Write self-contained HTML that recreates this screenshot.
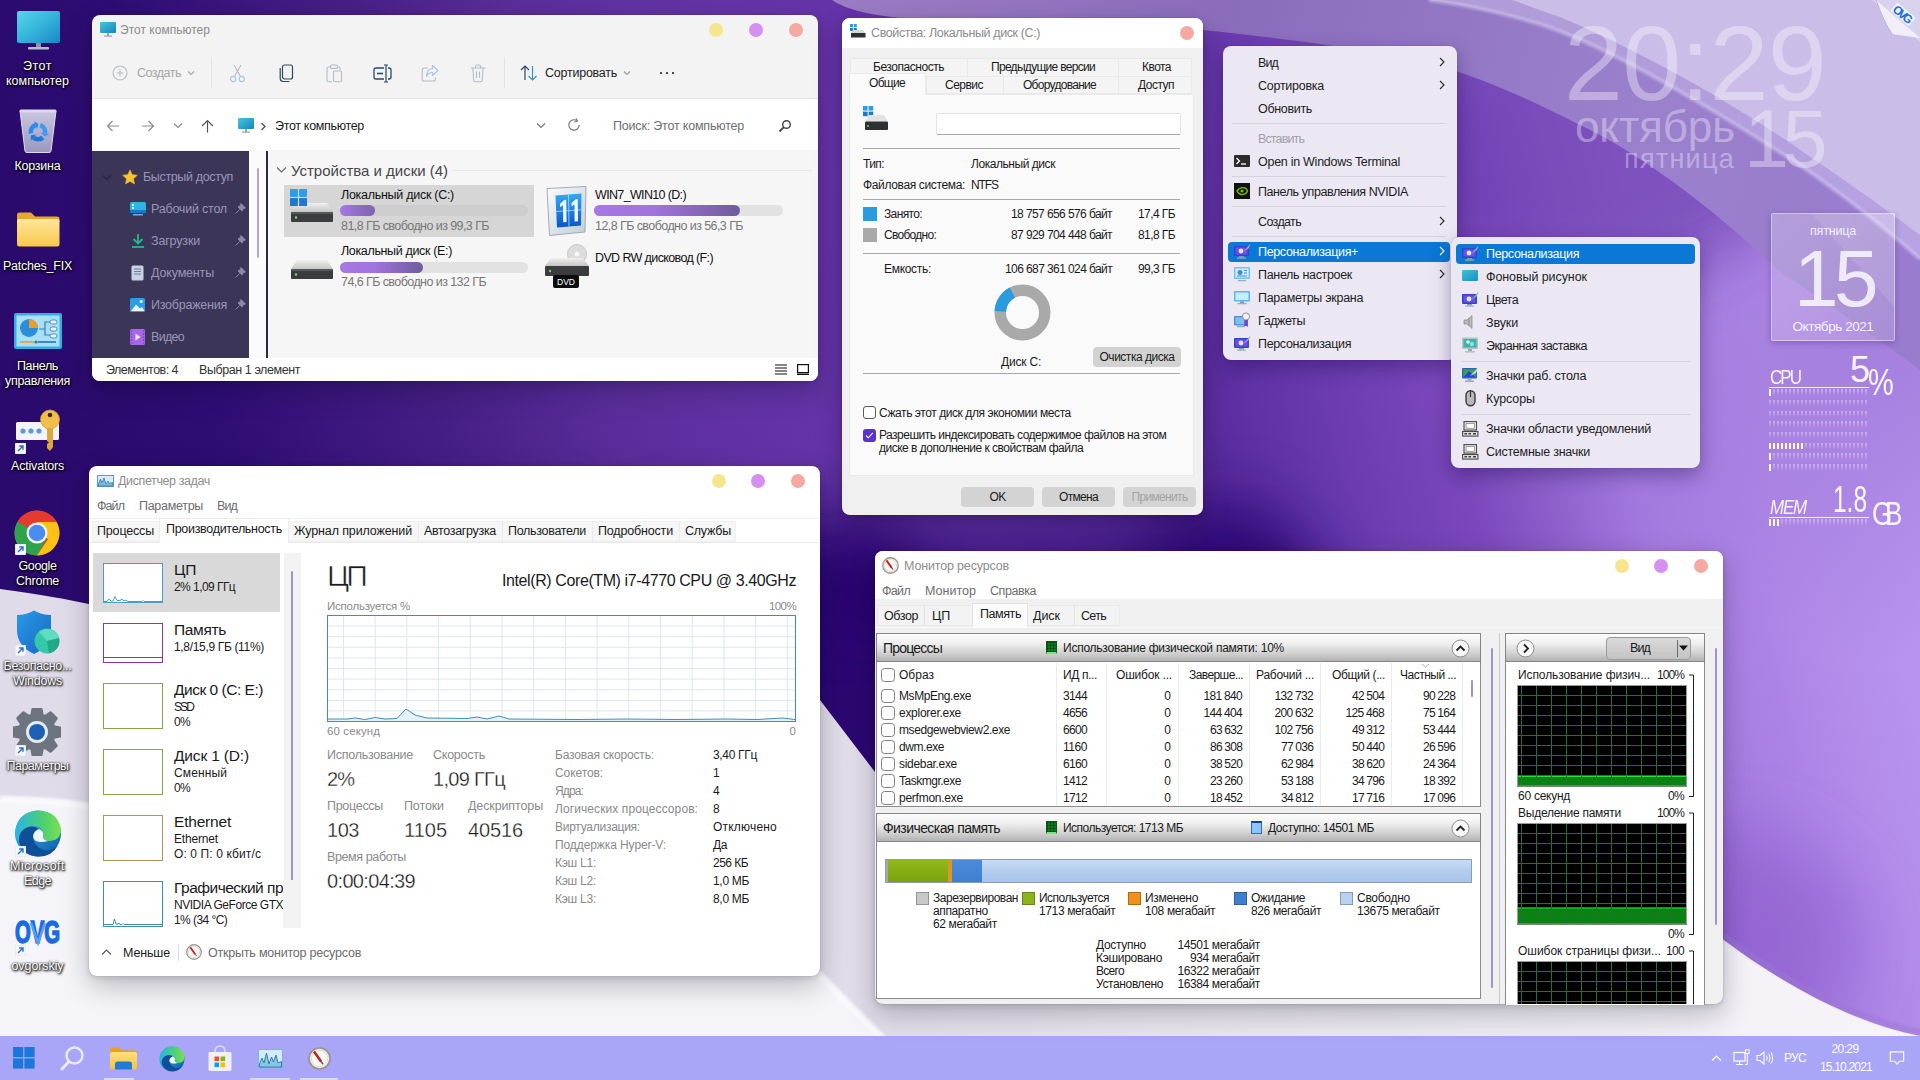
<!DOCTYPE html>
<html><head><meta charset="utf-8"><title>Desktop</title>
<style>
html,body{margin:0;padding:0;}
body{width:1920px;height:1080px;overflow:hidden;position:relative;background:#2a0a6c;font-family:"Liberation Sans",sans-serif;}
.r{position:absolute;box-sizing:border-box;}
.t{position:absolute;white-space:nowrap;line-height:1;font-family:"Liberation Sans",sans-serif;}
.win{position:absolute;box-sizing:border-box;border-radius:8px;box-shadow:0 8px 22px rgba(20,0,60,.35),0 0 2px rgba(0,0,0,.3);overflow:hidden;}
</style></head><body>
<!-- p_bg -->
<svg class="r" style="left:0;top:0" width="1920" height="1080" viewBox="0 0 1920 1080">
<defs>
<linearGradient id="gbase" x1="0" y1="200" x2="1920" y2="-300" gradientUnits="userSpaceOnUse">
<stop offset="0" stop-color="#2a0a6c"/><stop offset=".08" stop-color="#2e0d74"/><stop offset=".2" stop-color="#482087"/>
<stop offset=".27" stop-color="#5a2c9b"/><stop offset=".34" stop-color="#6232a5"/><stop offset=".41" stop-color="#6635aa"/><stop offset=".5" stop-color="#5f2fa3"/><stop offset=".56" stop-color="#5a2b9e"/><stop offset=".61" stop-color="#6738ac"/><stop offset=".68" stop-color="#7a48bc"/>
<stop offset=".76" stop-color="#a378de"/><stop offset=".84" stop-color="#b48deb"/><stop offset=".92" stop-color="#c09cf5"/><stop offset="1" stop-color="#bd99f2"/>
</linearGradient>
<linearGradient id="gdark" x1="0" y1="0" x2="0" y2="1">
<stop offset="0" stop-color="#1c0450" stop-opacity=".35"/><stop offset=".25" stop-color="#1c0450" stop-opacity="0"/>
<stop offset=".8" stop-color="#1c0450" stop-opacity="0"/><stop offset="1" stop-color="#1c0450" stop-opacity=".0"/>
</linearGradient>
<radialGradient id="gtr" cx="1920" cy="330" r="330" gradientUnits="userSpaceOnUse">
<stop offset="0" stop-color="#7a54ba" stop-opacity=".4"/><stop offset="1" stop-color="#7a54ba" stop-opacity="0"/>
</radialGradient>
<linearGradient id="gC" x1="830" y1="0" x2="1920" y2="300" gradientUnits="userSpaceOnUse">
<stop offset="0" stop-color="#9c7cc4"/><stop offset=".35" stop-color="#8a6cbc"/><stop offset=".7" stop-color="#9a80cc"/><stop offset="1" stop-color="#9a7ccf"/>
</linearGradient>
<linearGradient id="gB" x1="1300" y1="0" x2="1920" y2="300" gradientUnits="userSpaceOnUse">
<stop offset="0" stop-color="#b09cd6"/><stop offset=".5" stop-color="#b09cda"/><stop offset="1" stop-color="#b8a4e4"/>
</linearGradient>
<linearGradient id="gw" x1="0" y1="0" x2="1920" y2="0" gradientUnits="userSpaceOnUse">
<stop offset="0" stop-color="#dfdbe9"/><stop offset=".45" stop-color="#e1dde9"/><stop offset=".6" stop-color="#e8e5ed"/><stop offset=".85" stop-color="#efedf3"/><stop offset=".92" stop-color="#f5f3f8"/><stop offset="1" stop-color="#f6f4f9"/>
</linearGradient>
<filter id="bl"><feGaussianBlur stdDeviation="1.2"/></filter>
<filter id="bl6"><feGaussianBlur stdDeviation="8"/></filter>
<filter id="bl30" x="-50%" y="-50%" width="200%" height="200%"><feGaussianBlur stdDeviation="32"/></filter>
<linearGradient id="gtop" x1="0" y1="0" x2="840" y2="0" gradientUnits="userSpaceOnUse"><stop offset="0" stop-color="#5c2d9c" stop-opacity="0"/><stop offset=".2" stop-color="#5c2d9c" stop-opacity=".25"/><stop offset=".55" stop-color="#5c2d9c" stop-opacity="1"/><stop offset="1" stop-color="#5c2d9c" stop-opacity="1"/></linearGradient>
</defs>
<rect width="1920" height="1080" fill="url(#gbase)"/>
<rect x="1500" y="0" width="420" height="700" fill="url(#gtr)"/>
<ellipse cx="850" cy="690" rx="110" ry="170" fill="#24066a" opacity=".85" filter="url(#bl30)"/>
<ellipse cx="1225" cy="600" rx="90" ry="100" fill="#24066a" opacity=".7" filter="url(#bl30)"/>
<ellipse cx="1040" cy="585" rx="280" ry="50" fill="#24066a" opacity=".55" filter="url(#bl30)"/>
<ellipse cx="1570" cy="150" rx="230" ry="140" fill="#5a2aa0" opacity=".55" filter="url(#bl30)"/>
<!-- ribbons top right -->
<path d="M832,0 C842,7 862,15 910,19 C1000,23 1100,26 1203,30 C1300,40 1390,52 1456,71 C1500,86 1540,104 1600,135 C1660,168 1720,215 1778,270 C1830,305 1880,340 1920,370 L1920,0 Z" fill="url(#gC)"/>
<path d="M1429,0 C1470,5 1520,17 1554,29 C1600,46 1650,74 1684,94 C1730,120 1770,146 1800,165 C1850,200 1890,232 1920,259 L1920,0 Z" fill="url(#gB)"/>
<path d="M1429,0 C1470,5 1520,17 1554,29 C1600,46 1650,74 1684,94 C1730,120 1770,146 1800,165 C1850,200 1890,232 1920,259" fill="none" stroke="#d4c8ee" stroke-width="4" opacity=".55" filter="url(#bl)"/>
<path d="M1512,0 C1530,6 1545,12 1560,17 C1610,38 1655,62 1691,82 C1720,98 1745,114 1766,127 C1795,146 1820,163 1841,178 C1870,198 1895,216 1920,235 L1920,0 Z" fill="#cabde8"/>
<ellipse cx="1730" cy="940" rx="130" ry="110" fill="#8a58cc" opacity=".55" filter="url(#bl30)"/>
<!-- white lower region -->
<path d="M0,589 C40,594 70,600 89,604 C300,640 650,640 820,700 L875,772 C1000,900 1500,760 1724,940 C1780,982 1850,1022 1920,1036 L1920,1080 L0,1080 Z" fill="url(#gw)"/>
<path d="M0,799 C40,800 70,802 100,808 C350,870 650,900 820,975 L900,1056 L900,1080 L0,1080 Z" fill="#f5f4f8"/>
<path d="M0,799 C40,800 70,802 100,808 C350,870 650,900 820,975 L900,1056" fill="none" stroke="#fbfafc" stroke-width="7" opacity=".9" filter="url(#bl)"/>
<path d="M1724,940 C1780,982 1850,1022 1920,1036" fill="none" stroke="#9a78d0" stroke-width="6" opacity=".5" filter="url(#bl)" transform="translate(0,-4)"/>
</svg><div class="r" style="left:0px;top:1036px;width:1920px;height:44px;background:#a9a5f7;"></div>
<!-- p_icons -->
<svg class="r" style="left:17px;top:11px;" width="44" height="39" viewBox="0 0 44 39"><defs><linearGradient id="pc" x1="0" y1="0" x2="1" y2="1"><stop offset="0" stop-color="#5ad6ea"/><stop offset=".5" stop-color="#35b4dc"/><stop offset="1" stop-color="#1a86c4"/></linearGradient></defs><rect x="0" y="0" width="43" height="32" rx="2" fill="url(#pc)"/><rect x="19" y="32" width="5" height="4" fill="#8a96a4"/><rect x="11" y="36" width="21" height="2.4" rx="1" fill="#b4bec8"/></svg><span class="t" style="left:23.0px;top:59.6px;font-size:12.5px;color:#fff;letter-spacing:0.51px;text-shadow:0 0 2px rgba(0,0,0,.9),1px 1px 2px rgba(0,0,0,.9),0 1px 3px rgba(0,0,0,.7);">Этот</span><span class="t" style="left:6.0px;top:74.7px;font-size:12.5px;color:#fff;text-shadow:0 0 2px rgba(0,0,0,.9),1px 1px 2px rgba(0,0,0,.9),0 1px 3px rgba(0,0,0,.7);">компьютер</span><svg class="r" style="left:19px;top:109px;" width="38" height="44" viewBox="0 0 38 44"><defs><linearGradient id="rb" x1="0" y1="0" x2="0" y2="1"><stop offset="0" stop-color="#c9c6e0"/><stop offset="1" stop-color="#9a98c0"/></linearGradient></defs><path d="M1,2 H37 L32,42 Q31.8,43.5 30,43.5 H8 Q6.2,43.5 6,42 Z" fill="url(#rb)" stroke="#dcdaf0" stroke-width="1"/><rect x="0.5" y="0.5" width="37" height="3" rx="1.5" fill="#dcdaee"/><path d="M21.2,16.2 A7.2,7.2 0 0 1 26.1,24.3" fill="none" stroke="#3a9bf0" stroke-width="4.6"/><path d="M30.2,25.0 L25.5,27.4 L22.0,23.5 Z" fill="#3a9bf0"/><path d="M23.8,28.4 A7.2,7.2 0 0 1 14.4,28.5" fill="none" stroke="#1f78d8" stroke-width="4.6"/><path d="M11.7,31.7 L11.9,26.5 L17.1,25.3 Z" fill="#1f78d8"/><path d="M12.0,24.5 A7.2,7.2 0 0 1 16.5,16.2" fill="none" stroke="#2b8be8" stroke-width="4.6"/><path d="M15.1,12.3 L19.5,15.1 L18.0,20.2 Z" fill="#2b8be8"/></svg><span class="t" style="left:14.5px;top:159.7px;font-size:12.5px;color:#fff;letter-spacing:-0.23px;text-shadow:0 0 2px rgba(0,0,0,.9),1px 1px 2px rgba(0,0,0,.9),0 1px 3px rgba(0,0,0,.7);">Корзина</span><svg class="r" style="left:17px;top:212px;" width="43" height="35" viewBox="0 0 43 35"><defs><linearGradient id="fo" x1="0" y1="0" x2="0" y2="1"><stop offset="0" stop-color="#ffe69a"/><stop offset="1" stop-color="#f8c94a"/></linearGradient></defs><path d="M0,3 Q0,0.5 2.5,0.5 H14 L18,4.5 H40 Q42.5,4.5 42.5,7 V10 H0 Z" fill="#eaa82a"/><rect x="0" y="7" width="42.5" height="27.5" rx="2.5" fill="url(#fo)"/></svg><span class="t" style="left:3.0px;top:259.6px;font-size:12.5px;color:#fff;letter-spacing:-0.23px;text-shadow:0 0 2px rgba(0,0,0,.9),1px 1px 2px rgba(0,0,0,.9),0 1px 3px rgba(0,0,0,.7);">Patches_FIX</span><svg class="r" style="left:14px;top:313px;" width="48" height="37" viewBox="0 0 48 37"><rect x="0" y="0" width="48" height="36" rx="2" fill="#35aee8"/><rect x="2.5" y="2.5" width="43" height="31" fill="#a8e0f8"/><circle cx="15" cy="15" r="9" fill="#2a8fd8"/><path d="M15,15 V6 A9,9 0 0 1 24,15 Z" fill="#f09a28"/><path d="M25,16 H31 V9 H36 M31,16 V22 H36" fill="none" stroke="#3a7ab8" stroke-width="1.2"/><rect x="36" y="7" width="7" height="4" rx="2" fill="#e8f6ff" stroke="#3a7ab8" stroke-width=".8"/><rect x="36" y="14" width="7" height="4" rx="2" fill="#e8f6ff" stroke="#3a7ab8" stroke-width=".8"/><rect x="36" y="21" width="7" height="4" rx="2" fill="#e8f6ff" stroke="#3a7ab8" stroke-width=".8"/><path d="M6,29 H20" stroke="#f09a28" stroke-width="1.6"/><path d="M24,29 H42" stroke="#2a6fb8" stroke-width="1.6"/><circle cx="22" cy="29" r="1.6" fill="#2a6fb8"/></svg><span class="t" style="left:17.0px;top:359.6px;font-size:12.5px;color:#fff;letter-spacing:-0.36px;text-shadow:0 0 2px rgba(0,0,0,.9),1px 1px 2px rgba(0,0,0,.9),0 1px 3px rgba(0,0,0,.7);">Панель</span><span class="t" style="left:5.0px;top:374.6px;font-size:12.5px;color:#fff;letter-spacing:-0.32px;text-shadow:0 0 2px rgba(0,0,0,.9),1px 1px 2px rgba(0,0,0,.9),0 1px 3px rgba(0,0,0,.7);">управления</span><svg class="r" style="left:15px;top:409px;" width="46" height="45" viewBox="0 0 46 45"><rect x="1" y="13" width="43" height="18" rx="1.5" fill="#f2f4fa"/><circle cx="8" cy="22" r="2.6" fill="#5a9ad8"/><circle cx="16" cy="22" r="2.6" fill="#5a9ad8"/><circle cx="24" cy="22" r="2.6" fill="#5a9ad8"/><circle cx="35" cy="10.5" r="9.5" fill="#f2c04a"/><circle cx="35" cy="10.5" r="9.5" fill="none" stroke="#d89a28" stroke-width=".8"/><circle cx="35" cy="6" r="2.3" fill="#3a2a10"/><path d="M32,19 H38 V38 L35,42 L32,39 V35 L34,33.5 L32,32 Z" fill="#e0a838"/></svg><svg class="r" style="left:15px;top:443px;" width="11" height="11" viewBox="0 0 11 11"><rect width="11" height="11" rx="1" fill="#f4f6fa" stroke="#c8ccd4" stroke-width=".5"/><path d="M3,8 L8,3 M4.2,3 H8 V6.8" fill="none" stroke="#2a6fd0" stroke-width="1.4"/></svg><span class="t" style="left:11.0px;top:459.6px;font-size:12.5px;color:#fff;letter-spacing:-0.19px;text-shadow:0 0 2px rgba(0,0,0,.9),1px 1px 2px rgba(0,0,0,.9),0 1px 3px rgba(0,0,0,.7);">Activators</span><svg class="r" style="left:14px;top:510px;" width="46" height="46" viewBox="0 0 46 46"><circle cx="23" cy="23" r="22.5" fill="#e33b2e"/><path d="M23,23 L3.5,11.8 A22.5,22.5 0 0 0 23,45.5 L34,26 Z" fill="#2fa24c"/><path d="M23,23 L34,29 L23,45.5 A22.5,22.5 0 0 0 42.5,11.8 H23 Z" fill="#fbc114"/><path d="M3.5,11.8 A22.5,22.5 0 0 1 42.5,11.8 H23 Z" fill="#e33b2e"/><circle cx="23" cy="23" r="10.5" fill="#f4f4f4"/><circle cx="23" cy="23" r="8.3" fill="#4a8cf0"/></svg><svg class="r" style="left:15px;top:544px;" width="11" height="11" viewBox="0 0 11 11"><rect width="11" height="11" rx="1" fill="#f4f6fa" stroke="#c8ccd4" stroke-width=".5"/><path d="M3,8 L8,3 M4.2,3 H8 V6.8" fill="none" stroke="#2a6fd0" stroke-width="1.4"/></svg><span class="t" style="left:18.5px;top:559.6px;font-size:12.5px;color:#fff;letter-spacing:-0.38px;text-shadow:0 0 2px rgba(0,0,0,.9),1px 1px 2px rgba(0,0,0,.9),0 1px 3px rgba(0,0,0,.7);">Google</span><span class="t" style="left:16.0px;top:574.6px;font-size:12.5px;color:#fff;letter-spacing:-0.24px;text-shadow:0 0 2px rgba(0,0,0,.9),1px 1px 2px rgba(0,0,0,.9),0 1px 3px rgba(0,0,0,.7);">Chrome</span><svg class="r" style="left:16px;top:610px;" width="45" height="46" viewBox="0 0 45 46"><defs><linearGradient id="df" x1="0" y1="0" x2="1" y2="1"><stop offset="0" stop-color="#2a9ae8"/><stop offset="1" stop-color="#1668c0"/></linearGradient></defs><path d="M18,0.5 Q26,5 35,5 V20 Q35,36 18,44 Q1,36 1,20 V5 Q10,5 18,0.5 Z" fill="url(#df)"/><circle cx="31" cy="31" r="12.5" fill="#34c8a8"/><path d="M31,31 L23,22 A12.5,12.5 0 0 1 43,28 Z" fill="#62dcc0"/><path d="M31,31 L43,28 A12.5,12.5 0 0 1 33,43.3 Z" fill="#20a888"/></svg><svg class="r" style="left:15px;top:645px;" width="11" height="11" viewBox="0 0 11 11"><rect width="11" height="11" rx="1" fill="#f4f6fa" stroke="#c8ccd4" stroke-width=".5"/><path d="M3,8 L8,3 M4.2,3 H8 V6.8" fill="none" stroke="#2a6fd0" stroke-width="1.4"/></svg><span class="t" style="left:3.5px;top:659.6px;font-size:12.5px;color:#fff;letter-spacing:-0.31px;text-shadow:0 0 2px rgba(0,0,0,.9),1px 1px 2px rgba(0,0,0,.9),0 1px 3px rgba(0,0,0,.7);">Безопасно...</span><span class="t" style="left:13.0px;top:674.6px;font-size:12.5px;color:#fff;letter-spacing:-0.24px;text-shadow:0 0 2px rgba(0,0,0,.9),1px 1px 2px rgba(0,0,0,.9),0 1px 3px rgba(0,0,0,.7);">Windows</span><svg class="r" style="left:13px;top:708px;" width="48" height="48" viewBox="0 0 48 48"><path d="M40.7,18.8 L47.2,20.0 L47.2,28.0 L40.7,29.2 L39.5,32.2 L43.2,37.6 L37.6,43.2 L32.2,39.5 L29.2,40.7 L28.0,47.2 L20.0,47.2 L18.8,40.7 L15.8,39.5 L10.4,43.2 L4.8,37.6 L8.5,32.2 L7.3,29.2 L0.8,28.0 L0.8,20.0 L7.3,18.8 L8.5,15.8 L4.8,10.4 L10.4,4.8 L15.8,8.5 L18.8,7.3 L20.0,0.8 L28.0,0.8 L29.2,7.3 L32.2,8.5 L37.6,4.8 L43.2,10.4 L39.5,15.8 Z" fill="#6c7480" stroke="#6c7480" stroke-width="3" stroke-linejoin="round"/><circle cx="24" cy="24" r="11" fill="#e6ecf4"/><circle cx="24" cy="24" r="8" fill="#1d5fb4"/></svg><svg class="r" style="left:15px;top:745px;" width="11" height="11" viewBox="0 0 11 11"><rect width="11" height="11" rx="1" fill="#f4f6fa" stroke="#c8ccd4" stroke-width=".5"/><path d="M3,8 L8,3 M4.2,3 H8 V6.8" fill="none" stroke="#2a6fd0" stroke-width="1.4"/></svg><span class="t" style="left:6.5px;top:759.6px;font-size:12.5px;color:#fff;letter-spacing:-0.51px;text-shadow:0 0 2px rgba(0,0,0,.9),1px 1px 2px rgba(0,0,0,.9),0 1px 3px rgba(0,0,0,.7);">Параметры</span><svg class="r" style="left:14px;top:810px;" width="48" height="47" viewBox="0 0 48 47"><defs><linearGradient id="e1" x1="0" y1="0" x2="1" y2="1"><stop offset="0" stop-color="#35c1f1"/><stop offset="1" stop-color="#0c59a4"/></linearGradient><linearGradient id="e2" x1="0" y1="0" x2="1" y2="0"><stop offset="0" stop-color="#2ab4e8"/><stop offset=".6" stop-color="#4cd070"/><stop offset="1" stop-color="#7ce050"/></linearGradient></defs><circle cx="24" cy="23.5" r="23" fill="url(#e1)"/><path d="M1.5,20 Q4,2 24,0.5 Q44,1 47,20 Q47,30 36,31 Q28,31 29,25 Q30,21 26,18 Q18,13 10,19 Q4,24 5,32 Q1,27 1.5,20 Z" fill="url(#e2)"/><path d="M5,32 Q4,24 10,19 Q18,14 25,19 Q20,20 19,26 Q19,36 30,40 Q38,42 44,35 Q38,47 24,46.5 Q10,46 5,32 Z" fill="#0f4f9a"/><path d="M19,26 Q20,21 25,19 Q30,21 29,25 Q28,30 34,31 Q27,33 22,31 Q19,29 19,26 Z" fill="#f0f6fc"/></svg><svg class="r" style="left:15px;top:846px;" width="11" height="11" viewBox="0 0 11 11"><rect width="11" height="11" rx="1" fill="#f4f6fa" stroke="#c8ccd4" stroke-width=".5"/><path d="M3,8 L8,3 M4.2,3 H8 V6.8" fill="none" stroke="#2a6fd0" stroke-width="1.4"/></svg><span class="t" style="left:10.0px;top:859.6px;font-size:12.5px;color:#fff;letter-spacing:0.48px;text-shadow:0 0 2px rgba(0,0,0,.9),1px 1px 2px rgba(0,0,0,.9),0 1px 3px rgba(0,0,0,.7);">Microsoft</span><span class="t" style="left:24.0px;top:874.6px;font-size:12.5px;color:#fff;letter-spacing:-0.55px;text-shadow:0 0 2px rgba(0,0,0,.9),1px 1px 2px rgba(0,0,0,.9),0 1px 3px rgba(0,0,0,.7);">Edge</span><svg class="r" style="left:14px;top:917px;" width="48" height="30" viewBox="0 0 48 30"><text x="1" y="26" font-family="Liberation Sans" font-weight="700" font-size="31" fill="#1a6ae0" stroke="#1a6ae0" stroke-width="1.6" textLength="45" lengthAdjust="spacingAndGlyphs">OVG</text><path d="M17,6 L24,26 L31,6" fill="none" stroke="#5aa0f0" stroke-width="2.5"/></svg><svg class="r" style="left:15px;top:945px;" width="11" height="11" viewBox="0 0 11 11"><rect width="11" height="11" rx="1" fill="#f4f6fa" stroke="#c8ccd4" stroke-width=".5"/><path d="M3,8 L8,3 M4.2,3 H8 V6.8" fill="none" stroke="#2a6fd0" stroke-width="1.4"/></svg><span class="t" style="left:11.5px;top:959.6px;font-size:12.5px;color:#fff;letter-spacing:-0.09px;text-shadow:0 0 2px rgba(0,0,0,.9),1px 1px 2px rgba(0,0,0,.9),0 1px 3px rgba(0,0,0,.7);">ovgorskiy</span>
<!-- p_explorer -->
<div class="r" style="left:92px;top:15px;width:726px;height:366px;background:#f3f3f3;border-radius:8px;box-shadow:0 10px 28px rgba(0,0,20,.24),0 2px 6px rgba(0,0,20,.12),0 0 1px rgba(0,0,0,.4);"></div><div class="r" style="left:92px;top:98px;width:726px;height:52px;background:#fff;border-top:1px solid #e6e6e6;"></div><div class="r" style="left:92px;top:150px;width:726px;height:208px;background:#f6f6f6;"></div><div class="r" style="left:92px;top:150.5px;width:157px;height:207.5px;background:#3b3558;"></div><div class="r" style="left:249px;top:150px;width:17px;height:208px;background:#fbfbfb;"></div><div class="r" style="left:266px;top:150.5px;width:2px;height:207.5px;background:#2c2940;"></div><div class="r" style="left:257px;top:168px;width:2px;height:90px;background:#b8a2e2;border-radius:1px;"></div><div class="r" style="left:92px;top:357.5px;width:726px;height:23.5px;background:#fff;border-radius:0 0 8px 8px;"></div><svg class="r" style="left:100px;top:22px;" width="16" height="15" viewBox="0 0 16 15"><defs><linearGradient id="mg" x1="0" y1="0" x2="1" y2="1"><stop offset="0" stop-color="#45c6e0"/><stop offset="1" stop-color="#1586b8"/></linearGradient></defs><rect x="0" y="0" width="16" height="11" rx="1" fill="url(#mg)"/><rect x="7" y="11" width="2" height="3" fill="#9aa"/><rect x="4" y="13.5" width="8" height="1.3" fill="#9ab"/></svg><span class="t" style="left:120.0px;top:24.4px;font-size:12px;color:#8c8c8c;letter-spacing:0.02px;">Этот компьютер</span><div class="r" style="left:709px;top:23px;width:14px;height:14px;background:#f6e58c;border-radius:50%;"></div><div class="r" style="left:749px;top:23px;width:14px;height:14px;background:#d48ff0;border-radius:50%;"></div><div class="r" style="left:789px;top:23px;width:14px;height:14px;background:#f6a9a2;border-radius:50%;"></div><svg class="r" style="left:112px;top:64.5px;" width="16" height="16" viewBox="0 0 16 16"><circle cx="8" cy="8" r="7" fill="none" stroke="#b4bcc6" stroke-width="1.1"/><path d="M8,4.5V11.5M4.5,8H11.5" stroke="#b4bcc6" stroke-width="1.1"/></svg><span class="t" style="left:137.0px;top:66.9px;font-size:12.5px;color:#a6a6a6;letter-spacing:-0.50px;">Создать</span><svg class="r" style="left:187px;top:70px;" width="8" height="6" viewBox="0 0 8 6"><path d="M1,1.5 L4,4.5 L7,1.5" fill="none" stroke="#a6a6a6" stroke-width="1.2"/></svg><div class="r" style="left:211px;top:57px;width:1px;height:31px;background:#e4e4e4;"></div><svg class="r" style="left:229px;top:64px;" width="17" height="19" viewBox="0 0 17 19"><path d="M5,1 L11.5,12.5 M12,1 L5.5,12.5" stroke="#b4bcc6" stroke-width="1.1" fill="none"/><circle cx="4.2" cy="15" r="2.6" fill="none" stroke="#a8c4e0" stroke-width="1.1"/><circle cx="12.8" cy="15" r="2.6" fill="none" stroke="#a8c4e0" stroke-width="1.1"/></svg><svg class="r" style="left:278px;top:64px;" width="17" height="19" viewBox="0 0 17 19"><rect x="4.5" y="1" width="10" height="14" rx="2" fill="none" stroke="#2b4a63" stroke-width="1.2"/><path d="M2.2,4 V14.5 Q2.2,17.5 5.2,17.5 H11.5" fill="none" stroke="#2b4a63" stroke-width="1.2"/></svg><svg class="r" style="left:326px;top:64px;" width="17" height="19" viewBox="0 0 17 19"><path d="M4,3 H2.2 Q1,3 1,4.2 V16.5 Q1,17.7 2.2,17.7 H6" fill="none" stroke="#b4bcc6" stroke-width="1.1"/><rect x="4.5" y="1" width="7" height="3.4" rx="1" fill="none" stroke="#b4bcc6" stroke-width="1.1"/><path d="M12,3 H13 Q14,3 14,4.2 V6" fill="none" stroke="#b4bcc6" stroke-width="1.1"/><rect x="7.5" y="7" width="8" height="10.8" rx="1.2" fill="none" stroke="#b4bcc6" stroke-width="1.1"/></svg><svg class="r" style="left:373px;top:64px;" width="19" height="19" viewBox="0 0 19 19"><path d="M11,4 H3 Q1,4 1,6 V13 Q1,15 3,15 H11 M15,4 H16 Q18,4 18,6 V13 Q18,15 16,15 H15" fill="none" stroke="#2b4a63" stroke-width="1.3"/><path d="M13,1 V18 M11,1 H15 M11,18 H15" stroke="#2b4a63" stroke-width="1.2" fill="none"/><path d="M4,9.5 H10" stroke="#2b4a63" stroke-width="1.6"/></svg><svg class="r" style="left:421px;top:64px;" width="18" height="19" viewBox="0 0 18 19"><path d="M7,4 H3.2 Q1.2,4 1.2,6 V15 Q1.2,17 3.2,17 H12.5 Q14.5,17 14.5,15 V13.5" fill="none" stroke="#b4bcc6" stroke-width="1.1"/><path d="M11.5,1.5 L17,6.5 L11.5,11.5 V8.5 Q7,8.5 5.5,12.5 Q5.5,5 11.5,4.5 Z" fill="none" stroke="#a8c4e0" stroke-width="1.1" stroke-linejoin="round"/></svg><svg class="r" style="left:470px;top:64px;" width="16" height="19" viewBox="0 0 16 19"><path d="M1,4 H15 M5.5,4 V2.5 Q5.5,1 7,1 H9 Q10.5,1 10.5,2.5 V4 M2.8,4 L3.8,16.5 Q3.9,17.8 5.2,17.8 H10.8 Q12.1,17.8 12.2,16.5 L13.2,4 M6.5,7.5 V14 M9.5,7.5 V14" fill="none" stroke="#b4bcc6" stroke-width="1.1"/></svg><div class="r" style="left:504px;top:57px;width:1px;height:31px;background:#e4e4e4;"></div><svg class="r" style="left:520px;top:64px;" width="18" height="18" viewBox="0 0 18 18"><path d="M5,16 V2 M1,6 L5,2 L9,6" fill="none" stroke="#2b4a63" stroke-width="1.2"/><path d="M12.5,2 V16 M8.5,12 L12.5,16 L16.5,12" fill="none" stroke="#3a90d0" stroke-width="1.2"/></svg><span class="t" style="left:545.0px;top:66.9px;font-size:12.5px;color:#1c1c1c;letter-spacing:-0.24px;">Сортировать</span><svg class="r" style="left:623px;top:70px;" width="8" height="6" viewBox="0 0 8 6"><path d="M1,1.5 L4,4.5 L7,1.5" fill="none" stroke="#9a9a9a" stroke-width="1.1"/></svg><div class="r" style="left:659.8px;top:71.8px;width:2.4px;height:2.4px;background:#111;border-radius:50%;"></div><div class="r" style="left:665.8px;top:71.8px;width:2.4px;height:2.4px;background:#111;border-radius:50%;"></div><div class="r" style="left:671.8px;top:71.8px;width:2.4px;height:2.4px;background:#111;border-radius:50%;"></div><svg class="r" style="left:106px;top:120px;" width="14" height="12" viewBox="0 0 14 12"><path d="M13,6 H1.5 M6.5,1 L1.5,6 L6.5,11" fill="none" stroke="#8c8c8c" stroke-width="1.2"/></svg><svg class="r" style="left:141px;top:120px;" width="14" height="12" viewBox="0 0 14 12"><path d="M1,6 H12.5 M7.5,1 L12.5,6 L7.5,11" fill="none" stroke="#8c8c8c" stroke-width="1.2"/></svg><svg class="r" style="left:173px;top:122px;" width="10" height="7" viewBox="0 0 10 7"><path d="M1,1.5 L5,5.5 L9,1.5" fill="none" stroke="#8c8c8c" stroke-width="1.2"/></svg><svg class="r" style="left:201px;top:119px;" width="13" height="14" viewBox="0 0 13 14"><path d="M6.5,13.5 V1.5 M1,7 L6.5,1.5 L12,7" fill="none" stroke="#555" stroke-width="1.2"/></svg><svg class="r" style="left:238px;top:118px;" width="16" height="15" viewBox="0 0 16 15"><defs><linearGradient id="mg" x1="0" y1="0" x2="1" y2="1"><stop offset="0" stop-color="#45c6e0"/><stop offset="1" stop-color="#1586b8"/></linearGradient></defs><rect x="0" y="0" width="16" height="11" rx="1" fill="url(#mg)"/><rect x="7" y="11" width="2" height="3" fill="#9aa"/><rect x="4" y="13.5" width="8" height="1.3" fill="#9ab"/></svg><svg class="r" style="left:260px;top:122px;" width="6" height="9" viewBox="0 0 6 9"><path d="M1.5,1 L5,4.5 L1.5,8" fill="none" stroke="#555" stroke-width="1.4"/></svg><span class="t" style="left:275.0px;top:120.2px;font-size:12.5px;color:#1a1a1a;letter-spacing:-0.32px;">Этот компьютер</span><svg class="r" style="left:536px;top:122px;" width="10" height="7" viewBox="0 0 10 7"><path d="M1,1.5 L5,5.5 L9,1.5" fill="none" stroke="#777" stroke-width="1.2"/></svg><svg class="r" style="left:567px;top:118px;" width="14" height="14" viewBox="0 0 14 14"><path d="M12.2,7 A5.2,5.2 0 1 1 9.8,2.6" fill="none" stroke="#777" stroke-width="1.2"/><path d="M9,0.5 L10.5,3 L7.5,4" fill="none" stroke="#777" stroke-width="1.2"/></svg><span class="t" style="left:613.0px;top:120.2px;font-size:12.5px;color:#6e6e6e;letter-spacing:-0.19px;">Поиск: Этот компьютер</span><svg class="r" style="left:778px;top:119px;" width="14" height="14" viewBox="0 0 14 14"><circle cx="8.5" cy="5.5" r="3.8" fill="none" stroke="#444" stroke-width="1.4"/><path d="M5.8,8.2 L1.5,12.5" stroke="#444" stroke-width="1.8"/></svg><svg class="r" style="left:102px;top:174px;" width="10" height="7" viewBox="0 0 10 7"><path d="M1,1.5 L5,5.5 L9,1.5" fill="none" stroke="#2a2640" stroke-width="1.4"/></svg><svg class="r" style="left:122px;top:169px;" width="16" height="16" viewBox="0 0 16 16"><path d="M8,0.8 L10.2,5.6 L15.4,6.2 L11.5,9.8 L12.6,15 L8,12.4 L3.4,15 L4.5,9.8 L0.6,6.2 L5.8,5.6 Z" fill="#f7c531" stroke="#e9a91a" stroke-width=".6"/></svg><span class="t" style="left:143.0px;top:171.2px;font-size:12.5px;color:#9b95b6;letter-spacing:-0.35px;">Быстрый доступ</span><span class="t" style="left:151.0px;top:203.2px;font-size:12.5px;color:#9b95b6;letter-spacing:-0.21px;">Рабочий стол</span><svg class="r" style="left:235px;top:203px;" width="11" height="12" viewBox="0 0 11 12"><path d="M6,0.5 L10.5,5 L8.5,5.5 L7,8 L3,4 L5.5,2.5 Z M4.5,6.5 L0.8,10.5" fill="#8d88a6" stroke="#8d88a6" stroke-width="1"/></svg><span class="t" style="left:151.0px;top:235.2px;font-size:12.5px;color:#9b95b6;letter-spacing:-0.16px;">Загрузки</span><svg class="r" style="left:235px;top:235px;" width="11" height="12" viewBox="0 0 11 12"><path d="M6,0.5 L10.5,5 L8.5,5.5 L7,8 L3,4 L5.5,2.5 Z M4.5,6.5 L0.8,10.5" fill="#8d88a6" stroke="#8d88a6" stroke-width="1"/></svg><span class="t" style="left:151.0px;top:267.1px;font-size:12.5px;color:#9b95b6;letter-spacing:-0.16px;">Документы</span><svg class="r" style="left:235px;top:267px;" width="11" height="12" viewBox="0 0 11 12"><path d="M6,0.5 L10.5,5 L8.5,5.5 L7,8 L3,4 L5.5,2.5 Z M4.5,6.5 L0.8,10.5" fill="#8d88a6" stroke="#8d88a6" stroke-width="1"/></svg><span class="t" style="left:151.0px;top:299.1px;font-size:12.5px;color:#9b95b6;letter-spacing:-0.23px;">Изображения</span><svg class="r" style="left:235px;top:299px;" width="11" height="12" viewBox="0 0 11 12"><path d="M6,0.5 L10.5,5 L8.5,5.5 L7,8 L3,4 L5.5,2.5 Z M4.5,6.5 L0.8,10.5" fill="#8d88a6" stroke="#8d88a6" stroke-width="1"/></svg><span class="t" style="left:151.0px;top:331.1px;font-size:12.5px;color:#9b95b6;letter-spacing:-0.70px;">Видео</span><svg class="r" style="left:130px;top:202px;" width="16" height="14" viewBox="0 0 16 14"><rect x="0" y="0" width="16" height="11" rx="1.5" fill="#2fb4e6"/><rect x="0" y="8" width="16" height="3" fill="#1a78c8"/><rect x="2" y="2" width="2" height="2" fill="#fff" opacity=".8"/><rect x="2" y="5" width="2" height="2" fill="#fff" opacity=".8"/><rect x="3" y="12" width="10" height="1.5" fill="#7ad"/></svg><svg class="r" style="left:131px;top:233px;" width="14" height="16" viewBox="0 0 14 16"><path d="M7,1 V10 M2.5,6 L7,10.5 L11.5,6" fill="none" stroke="#2cb48c" stroke-width="1.8"/><path d="M1,14 H13" stroke="#2cb48c" stroke-width="1.8"/></svg><svg class="r" style="left:131px;top:265px;" width="13" height="16" viewBox="0 0 13 16"><rect x="0.5" y="0.5" width="12" height="15" rx="1.5" fill="#c9d3e4"/><path d="M3,4 H10 M3,6.5 H10 M3,9 H10" stroke="#6b7fa6" stroke-width="1.1"/></svg><svg class="r" style="left:130px;top:298px;" width="15" height="14" viewBox="0 0 15 14"><rect x="0" y="0" width="15" height="14" rx="1.5" fill="#2f9be6"/><path d="M1,13 L6,6.5 L10,10.5 L12,9 L14.5,13 Z" fill="#e9f4ff"/><circle cx="11.2" cy="3.6" r="1.5" fill="#e9f4ff"/></svg><svg class="r" style="left:130px;top:329px;" width="15" height="16" viewBox="0 0 15 16"><rect x="0" y="0" width="15" height="16" rx="1.5" fill="#a765e8"/><path d="M5.5,4.5 L10.5,8 L5.5,11.5 Z" fill="#f2e6ff"/><path d="M1.5,1.5 V14.5 M13.5,1.5 V14.5" stroke="#7c3fc0" stroke-width="1.3" stroke-dasharray="1.5,1.5"/></svg><svg class="r" style="left:276px;top:166px;" width="11" height="8" viewBox="0 0 11 8"><path d="M1,1.5 L5.5,6 L10,1.5" fill="none" stroke="#666" stroke-width="1.1"/></svg><span class="t" style="left:291.0px;top:162.8px;font-size:15px;color:#46464a;letter-spacing:-0.01px;">Устройства и диски (4)</span><div class="r" style="left:452px;top:170px;width:360px;height:1px;background:#e9e9e9;"></div><div class="r" style="left:284px;top:185px;width:250px;height:52px;background:#d6d6d6;"></div><svg class="r" style="left:291px;top:203px;" width="42" height="19" viewBox="0 0 42 19"><defs><linearGradient id="dg" x1="0" y1="0" x2="0" y2="1"><stop offset="0" stop-color="#f0f0f0"/><stop offset="1" stop-color="#c4c4c4"/></linearGradient></defs><path d="M6,0 L36,0 L42,9 L0,9 Z" fill="url(#dg)"/><rect x="0" y="9" width="42" height="10" rx="1" fill="#3a3c3e"/><rect x="0" y="9" width="42" height="2" fill="#55585a"/><circle cx="5" cy="14.5" r="1.3" fill="#5fdc5a"/></svg><svg class="r" style="left:290px;top:189px;" width="17" height="17" viewBox="0 0 17 17"><rect x="0" y="0" width="7.9" height="7.9" fill="#2a9df0"/><rect x="9.1" y="0" width="7.9" height="7.9" fill="#2a9df0"/><rect x="0" y="9.1" width="7.9" height="7.9" fill="#1879d6"/><rect x="9.1" y="9.1" width="7.9" height="7.9" fill="#1879d6"/></svg><span class="t" style="left:341.0px;top:189.2px;font-size:12.5px;color:#111;letter-spacing:-0.28px;">Локальный диск (C:)</span><div class="r" style="left:340px;top:205px;width:188px;height:11px;background:#cdcdcd;border-radius:6px;"></div><div class="r" style="left:340px;top:205px;width:35px;height:11px;border-radius:6px;background:linear-gradient(90deg,#a777e6,#7c64ac);"></div><span class="t" style="left:341.0px;top:220.2px;font-size:12.5px;color:#767676;letter-spacing:-0.57px;">81,8 ГБ свободно из 99,3 ГБ</span><svg class="r" style="left:291px;top:260px;" width="42" height="19" viewBox="0 0 42 19"><defs><linearGradient id="dg" x1="0" y1="0" x2="0" y2="1"><stop offset="0" stop-color="#f0f0f0"/><stop offset="1" stop-color="#c4c4c4"/></linearGradient></defs><path d="M6,0 L36,0 L42,9 L0,9 Z" fill="url(#dg)"/><rect x="0" y="9" width="42" height="10" rx="1" fill="#3a3c3e"/><rect x="0" y="9" width="42" height="2" fill="#55585a"/><circle cx="5" cy="14.5" r="1.3" fill="#5fdc5a"/></svg><span class="t" style="left:341.0px;top:245.2px;font-size:12.5px;color:#111;letter-spacing:-0.35px;">Локальный диск (E:)</span><div class="r" style="left:340px;top:262px;width:188px;height:11px;background:#e2e2e2;border-radius:6px;"></div><div class="r" style="left:340px;top:262px;width:83px;height:11px;border-radius:6px;background:linear-gradient(90deg,#a777e6,#a274de 40%,#6f5c9c);"></div><span class="t" style="left:341.0px;top:276.1px;font-size:12.5px;color:#767676;letter-spacing:-0.57px;">74,6 ГБ свободно из 132 ГБ</span><svg class="r" style="left:546px;top:186px;" width="42" height="50" viewBox="0 0 42 50"><defs><linearGradient id="d11" x1="0" y1="0" x2="1" y2="1"><stop offset="0" stop-color="#fafcfe"/><stop offset="1" stop-color="#c3ccd5"/></linearGradient><linearGradient id="d11b" x1="0" y1="0" x2="0" y2="1"><stop offset="0" stop-color="#35aaf2"/><stop offset="1" stop-color="#0a55c8"/></linearGradient></defs><path d="M1,2.5 L40,0.5 L39,46 L3.5,49.5 Z" fill="url(#d11)" stroke="#8f9aa6" stroke-width=".8"/><path d="M9.5,9.5 L35.5,7.5 L35,39.5 L11,41.5 Z" fill="url(#d11b)"/><path d="M9.8,25.5 L35.3,23.8" stroke="#9fd4ff" stroke-width=".9"/><path d="M22.5,8.5 L23,40.5" stroke="#9fd4ff" stroke-width=".9"/><path d="M14,18 L18.2,14 L20.2,13.8 L20.6,36 L17.2,36.3 L17,19 L14.2,21.2 Z" fill="#f2f8ff"/><path d="M25.5,17.2 L29.7,13.2 L31.7,13 L32,35.2 L28.6,35.5 L28.5,18.2 L25.7,20.4 Z" fill="#f2f8ff"/></svg><span class="t" style="left:595.0px;top:189.2px;font-size:12.5px;color:#111;letter-spacing:-0.65px;">WIN7_WIN10 (D:)</span><div class="r" style="left:594px;top:205px;width:189px;height:11px;background:#e2e2e2;border-radius:6px;"></div><div class="r" style="left:594px;top:205px;width:146px;height:11px;border-radius:6px;background:linear-gradient(90deg,#a777e6,#a274de 40%,#6f5c9c);"></div><span class="t" style="left:595.0px;top:220.2px;font-size:12.5px;color:#767676;letter-spacing:-0.57px;">12,8 ГБ свободно из 56,3 ГБ</span><svg class="r" style="left:545px;top:244px;" width="44" height="45" viewBox="0 0 44 45"><defs><linearGradient id="dv" x1="0" y1="0" x2="0" y2="1"><stop offset="0" stop-color="#f0f0f0"/><stop offset="1" stop-color="#c4c4c4"/></linearGradient></defs><circle cx="32" cy="10" r="9.5" fill="#dcdcdc" stroke="#c8c8c8"/><circle cx="32" cy="10" r="2.5" fill="#f6f6f6"/><path d="M6,14 L38,14 L44,22 L0,22 Z" fill="url(#dv)"/><rect x="0" y="22" width="44" height="10" rx="1" fill="#3a3c3e"/><circle cx="5" cy="27" r="1.2" fill="#5fdc5a"/><rect x="8" y="31" width="26" height="13" rx="2" fill="#0c0c0c"/></svg><span class="t" style="left:557.0px;top:277.8px;font-size:8.5px;color:#fff;">DVD</span><span class="t" style="left:595.0px;top:252.2px;font-size:12.5px;color:#111;letter-spacing:-0.62px;">DVD RW дисковод (F:)</span><span class="t" style="left:106.0px;top:364.1px;font-size:12.5px;color:#333;letter-spacing:-0.53px;">Элементов: 4</span><span class="t" style="left:199.0px;top:364.1px;font-size:12.5px;color:#333;letter-spacing:-0.42px;">Выбран 1 элемент</span><svg class="r" style="left:775px;top:364px;" width="12" height="11" viewBox="0 0 12 11"><path d="M0,1 H12 M0,4 H12 M0,7 H12 M0,10 H12" stroke="#111" stroke-width="1.1"/></svg><svg class="r" style="left:797px;top:364px;" width="12" height="11" viewBox="0 0 12 11"><rect x=".6" y=".6" width="10.8" height="8" fill="none" stroke="#111" stroke-width="1.2"/><path d="M0,10.3 H12" stroke="#111" stroke-width="1.4"/></svg>
<!-- p_props -->
<div class="r" style="left:842px;top:17.5px;width:361px;height:497px;background:#f0f0f0;border-radius:8px;box-shadow:0 10px 28px rgba(0,0,20,.24),0 2px 6px rgba(0,0,20,.12),0 0 1px rgba(0,0,0,.4);"></div><div class="r" style="left:842px;top:17.5px;width:361px;height:30px;background:#fff;border-radius:8px 8px 0 0;"></div><svg class="r" style="left:850px;top:24px;" width="16" height="15" viewBox="0 0 16 15"><rect x="0" y="0" width="3" height="3" fill="#2a9df0"/><rect x="3.8" y="0" width="3" height="3" fill="#2a9df0"/><rect x="0" y="3.8" width="3" height="3" fill="#1879d6"/><rect x="3.8" y="3.8" width="3" height="3" fill="#1879d6"/><path d="M3,6 L13,6 L15.5,9 L1,9 Z" fill="#d8d8d8"/><rect x="1" y="9" width="14.5" height="4.5" fill="#2e3032"/></svg><span class="t" style="left:871.0px;top:27.1px;font-size:12.5px;color:#8c8c8c;letter-spacing:-0.38px;">Свойства: Локальный диск (C:)</span><div class="r" style="left:1179.7px;top:26px;width:14px;height:14px;background:#f6a9a2;border-radius:50%;"></div><div class="r" style="left:850px;top:58px;width:342px;height:19px;background:#f4f4f4;border:1px solid #e9e9e9;"></div><div class="r" style="left:967px;top:58px;width:1px;height:19px;background:#e9e9e9;"></div><div class="r" style="left:1118px;top:58px;width:1px;height:19px;background:#e9e9e9;"></div><div class="r" style="left:926px;top:76px;width:266px;height:18px;background:#f4f4f4;border:1px solid #e9e9e9;"></div><div class="r" style="left:1003px;top:76px;width:1px;height:18px;background:#e9e9e9;"></div><div class="r" style="left:1118px;top:76px;width:1px;height:18px;background:#e9e9e9;"></div><div class="r" style="left:849px;top:94px;width:345px;height:382px;background:#fafafa;border:1px solid #eaeaea;"></div><div class="r" style="left:849px;top:73px;width:77px;height:22px;background:#fafafa;border:1px solid #eaeaea;border-bottom:none;"></div><span class="t" style="left:873.0px;top:60.9px;font-size:12px;color:#1a1a1a;letter-spacing:-0.46px;">Безопасность</span><span class="t" style="left:991.0px;top:60.9px;font-size:12px;color:#1a1a1a;letter-spacing:-0.70px;">Предыдущие версии</span><span class="t" style="left:1142.0px;top:60.9px;font-size:12px;color:#1a1a1a;letter-spacing:-0.54px;">Квота</span><span class="t" style="left:869.0px;top:76.9px;font-size:12px;color:#1a1a1a;letter-spacing:-0.69px;">Общие</span><span class="t" style="left:945.0px;top:78.9px;font-size:12px;color:#1a1a1a;letter-spacing:-0.52px;">Сервис</span><span class="t" style="left:1023.0px;top:78.9px;font-size:12px;color:#1a1a1a;letter-spacing:-0.72px;">Оборудование</span><span class="t" style="left:1138.0px;top:78.9px;font-size:12px;color:#1a1a1a;letter-spacing:-0.51px;">Доступ</span><svg class="r" style="left:863px;top:106px;" width="26" height="26" viewBox="0 0 26 26"><rect x="0" y="0" width="4.6" height="4.6" fill="#2a9df0"/><rect x="5.6" y="0" width="4.6" height="4.6" fill="#2a9df0"/><rect x="0" y="5.6" width="4.6" height="4.6" fill="#1879d6"/><rect x="5.6" y="5.6" width="4.6" height="4.6" fill="#1879d6"/><path d="M6,9 L21,9 L25,15.5 L2,15.5 Z" fill="#e2e2e2"/><rect x="2" y="15.5" width="23" height="8.5" rx="1" fill="#2e3032"/><circle cx="5" cy="20" r="1" fill="#5fdc5a"/></svg><div class="r" style="left:936px;top:113px;width:245px;height:22px;background:#fff;border:1px solid #e4e4e4;border-bottom:1px solid #a8a8a8;border-radius:2px;"></div><div class="r" style="left:863px;top:148px;width:317px;height:1px;background:#a9a9a9;"></div><div class="r" style="left:863px;top:199px;width:317px;height:1px;background:#a9a9a9;"></div><div class="r" style="left:863px;top:253px;width:317px;height:1px;background:#a9a9a9;"></div><div class="r" style="left:863px;top:373px;width:317px;height:1px;background:#a9a9a9;"></div><span class="t" style="left:863.0px;top:157.9px;font-size:12px;color:#1a1a1a;letter-spacing:-0.58px;">Тип:</span><span class="t" style="left:971.0px;top:157.9px;font-size:12px;color:#1a1a1a;letter-spacing:-0.45px;">Локальный диск</span><span class="t" style="left:863.0px;top:178.9px;font-size:12px;color:#1a1a1a;letter-spacing:-0.36px;">Файловая система:</span><span class="t" style="left:971.0px;top:178.9px;font-size:12px;color:#1a1a1a;letter-spacing:-1.08px;">NTFS</span><div class="r" style="left:863px;top:207px;width:14px;height:14px;background:#2b9be0;"></div><div class="r" style="left:863px;top:228px;width:14px;height:14px;background:#a9a9a9;"></div><span class="t" style="left:884.0px;top:207.9px;font-size:12px;color:#1a1a1a;letter-spacing:-0.63px;">Занято:</span><span class="t" style="left:884.0px;top:228.9px;font-size:12px;color:#1a1a1a;letter-spacing:-0.72px;">Свободно:</span><span class="t" style="left:1011.0px;top:207.9px;font-size:12px;color:#1a1a1a;letter-spacing:-0.59px;">18 757 656 576 байт</span><span class="t" style="left:1011.0px;top:228.9px;font-size:12px;color:#1a1a1a;letter-spacing:-0.59px;">87 929 704 448 байт</span><span class="t" style="left:1138.0px;top:207.9px;font-size:12px;color:#1a1a1a;letter-spacing:-0.58px;">17,4 ГБ</span><span class="t" style="left:1138.0px;top:228.9px;font-size:12px;color:#1a1a1a;letter-spacing:-0.58px;">81,8 ГБ</span><span class="t" style="left:884.0px;top:262.9px;font-size:12px;color:#1a1a1a;letter-spacing:-0.30px;">Емкость:</span><span class="t" style="left:1005.0px;top:262.9px;font-size:12px;color:#1a1a1a;letter-spacing:-0.59px;">106 687 361 024 байт</span><span class="t" style="left:1138.0px;top:262.9px;font-size:12px;color:#1a1a1a;letter-spacing:-0.58px;">99,3 ГБ</span><svg class="r" style="left:993.5px;top:284px;" width="57" height="57" viewBox="0 0 57 57"><circle cx="28.5" cy="28.5" r="22.25" fill="none" stroke="#a9a9a9" stroke-width="11.5"/><path d="M0.54,27.03 A28,28 0 0 1 15.79,3.55 L21.01,13.80 A16.5,16.5 0 0 0 12.02,27.64 Z" fill="#2b9be0"/></svg><span class="t" style="left:1001.0px;top:355.9px;font-size:12px;color:#1a1a1a;letter-spacing:-0.20px;">Диск C:</span><div class="r" style="left:1093px;top:347px;width:88px;height:19.5px;background:#d2d2d2;border-radius:4px;"></div><span class="t" style="left:1099.5px;top:350.9px;font-size:12px;color:#1a1a1a;letter-spacing:-0.48px;">Очистка диска</span><div class="r" style="left:863px;top:406px;width:12.5px;height:12.5px;background:#fff;border:1px solid #5a5a5a;border-radius:3px;"></div><span class="t" style="left:879.0px;top:406.9px;font-size:12px;color:#1a1a1a;letter-spacing:-0.43px;">Сжать этот диск для экономии места</span><div class="r" style="left:863px;top:429px;width:12.5px;height:12.5px;background:#5b2fd0;border-radius:3px;"></div><svg class="r" style="left:863px;top:429px;" width="12.5" height="12.5" viewBox="0 0 12.5 12.5"><path d="M3,6.5 L5.3,8.8 L9.8,3.8" fill="none" stroke="#fff" stroke-width="1.1"/></svg><span class="t" style="left:879.0px;top:429.4px;font-size:12px;color:#1a1a1a;letter-spacing:-0.52px;">Разрешить индексировать содержимое файлов на этом</span><span class="t" style="left:879.0px;top:442.4px;font-size:12px;color:#1a1a1a;letter-spacing:-0.50px;">диске в дополнение к свойствам файла</span><div class="r" style="left:961px;top:487px;width:72.5px;height:19.5px;background:#d3d3d3;border-radius:4px;"></div><span class="t" style="left:989.5px;top:490.9px;font-size:12px;color:#1a1a1a;letter-spacing:-0.67px;">OK</span><div class="r" style="left:1042px;top:487px;width:72.5px;height:19.5px;background:#d3d3d3;border-radius:4px;"></div><span class="t" style="left:1059.0px;top:490.9px;font-size:12px;color:#1a1a1a;letter-spacing:-0.68px;">Отмена</span><div class="r" style="left:1123px;top:487px;width:72.5px;height:19.5px;background:#d3d3d3;border-radius:4px;"></div><span class="t" style="left:1131.5px;top:490.9px;font-size:12px;color:#a3a3a3;letter-spacing:-0.67px;">Применить</span>
<!-- p_menu -->
<div class="r" style="left:1223px;top:46px;width:234px;height:313.5px;background:#ece8f3;border-radius:8px;box-shadow:0 8px 20px rgba(20,0,60,.35),0 0 1px rgba(0,0,0,.35);"></div><span class="t" style="left:1258.0px;top:56.8px;font-size:12.5px;color:#1c1c1c;letter-spacing:-0.87px;">Вид</span><svg class="r" style="left:1439px;top:57px;" width="6" height="10" viewBox="0 0 6 10"><path d="M1,1 L5,5 L1,9" fill="none" stroke="#2a2a2a" stroke-width="1.1"/></svg><span class="t" style="left:1258.0px;top:79.8px;font-size:12.5px;color:#1c1c1c;letter-spacing:-0.26px;">Сортировка</span><svg class="r" style="left:1439px;top:80px;" width="6" height="10" viewBox="0 0 6 10"><path d="M1,1 L5,5 L1,9" fill="none" stroke="#2a2a2a" stroke-width="1.1"/></svg><span class="t" style="left:1258.0px;top:102.8px;font-size:12.5px;color:#1c1c1c;letter-spacing:-0.32px;">Обновить</span><div class="r" style="left:1232px;top:123px;width:214px;height:1px;background:#d6d1de;"></div><span class="t" style="left:1258.0px;top:132.8px;font-size:12.5px;color:#a29fa8;letter-spacing:-0.87px;">Вставить</span><svg class="r" style="left:1234px;top:155px;" width="16" height="12" viewBox="0 0 16 12"><rect width="16" height="12" rx="1" fill="#2b2b2b"/><path d="M2.5,3 L5.5,6 L2.5,9" fill="none" stroke="#fff" stroke-width="1.3"/><path d="M7,9 H12" stroke="#fff" stroke-width="1.3"/></svg><span class="t" style="left:1258.0px;top:155.8px;font-size:12.5px;color:#1c1c1c;letter-spacing:-0.27px;">Open in Windows Terminal</span><div class="r" style="left:1232px;top:176px;width:214px;height:1px;background:#d6d1de;"></div><svg class="r" style="left:1234px;top:183px;" width="16" height="16" viewBox="0 0 16 16"><rect width="16" height="16" fill="#111"/><path d="M3,8 Q6,3.5 11,5 Q13,6 13.5,8 Q12,12 7,11.5 Q4,10.5 3,8 Z" fill="none" stroke="#76b900" stroke-width="1.4"/><circle cx="8" cy="8" r="1.6" fill="#76b900"/></svg><span class="t" style="left:1258.0px;top:185.8px;font-size:12.5px;color:#1c1c1c;letter-spacing:-0.42px;">Панель управления NVIDIA</span><div class="r" style="left:1232px;top:206px;width:214px;height:1px;background:#d6d1de;"></div><span class="t" style="left:1258.0px;top:215.8px;font-size:12.5px;color:#1c1c1c;letter-spacing:-0.64px;">Создать</span><svg class="r" style="left:1439px;top:216px;" width="6" height="10" viewBox="0 0 6 10"><path d="M1,1 L5,5 L1,9" fill="none" stroke="#2a2a2a" stroke-width="1.1"/></svg><div class="r" style="left:1232px;top:236px;width:214px;height:1px;background:#d6d1de;"></div><div class="r" style="left:1228px;top:242px;width:222px;height:19.5px;background:#0a78d4;border-radius:4px;"></div><svg class="r" style="left:1234px;top:243px;" width="17" height="16" viewBox="0 0 17 16"><rect x="0" y="3" width="15" height="10" rx="1" fill="#2a46d6"/><rect x="1.5" y="4.5" width="12" height="7" fill="#6f4fe0"/><circle cx="7" cy="8" r="2.4" fill="#dfe8ff"/><path d="M9,9 L16.5,0.5 L15,5 Z" fill="#9aa6b8"/><rect x="5" y="13" width="5" height="1.5" fill="#8899aa"/><rect x="3" y="14.5" width="9" height="1.2" fill="#9ab"/></svg><span class="t" style="left:1258.0px;top:245.8px;font-size:12.5px;color:#fff;letter-spacing:-0.35px;">Персонализация+</span><svg class="r" style="left:1439px;top:246px;" width="6" height="10" viewBox="0 0 6 10"><path d="M1,1 L5,5 L1,9" fill="none" stroke="#fff" stroke-width="1.1"/></svg><svg class="r" style="left:1234px;top:266px;" width="17" height="16" viewBox="0 0 17 16"><rect x="0" y="1" width="16" height="12" rx="1" fill="#6ec4ea"/><rect x="1.5" y="2.5" width="13" height="9" fill="#d6f0fb"/><circle cx="6" cy="6.5" r="2.5" fill="#3a8fd0"/><path d="M10,4.5 H13 M10,7 H13 M3,10 H13" stroke="#3a8fd0" stroke-width="1"/><rect x="4" y="14" width="8" height="1.3" fill="#9ab"/></svg><span class="t" style="left:1258.0px;top:268.8px;font-size:12.5px;color:#1c1c1c;letter-spacing:-0.32px;">Панель настроек</span><svg class="r" style="left:1439px;top:269px;" width="6" height="10" viewBox="0 0 6 10"><path d="M1,1 L5,5 L1,9" fill="none" stroke="#2a2a2a" stroke-width="1.1"/></svg><svg class="r" style="left:1234px;top:289px;" width="17" height="16" viewBox="0 0 17 16"><rect x="0" y="2" width="16" height="10.5" rx="1" fill="#59b7e8"/><rect x="1.5" y="3.5" width="13" height="7.5" fill="#c9ecfb"/><rect x="6" y="12.5" width="4" height="1.5" fill="#89a"/><rect x="3.5" y="14" width="9" height="1.3" fill="#9ab"/></svg><span class="t" style="left:1258.0px;top:291.8px;font-size:12.5px;color:#1c1c1c;letter-spacing:-0.29px;">Параметры экрана</span><svg class="r" style="left:1234px;top:312px;" width="17" height="16" viewBox="0 0 17 16"><rect x="0" y="4" width="14" height="9.5" rx="1" fill="#3d8fe0"/><rect x="1.3" y="5.3" width="11.4" height="6.9" fill="#7cc0f2"/><circle cx="12" cy="4.5" r="3.6" fill="#f2f2f2" stroke="#888" stroke-width=".9"/><path d="M10.5,8 L10,15 L12,13.5 L14,15 L13.5,8" fill="#7a3fd0"/><rect x="3" y="14" width="8" height="1.3" fill="#9ab"/></svg><span class="t" style="left:1258.0px;top:314.8px;font-size:12.5px;color:#1c1c1c;letter-spacing:-0.42px;">Гаджеты</span><svg class="r" style="left:1234px;top:335px;" width="17" height="16" viewBox="0 0 17 16"><rect x="0" y="3" width="15" height="10" rx="1" fill="#2a46d6"/><rect x="1.5" y="4.5" width="12" height="7" fill="#6f4fe0"/><circle cx="7" cy="8" r="2.4" fill="#dfe8ff"/><path d="M9,9 L16.5,0.5 L15,5 Z" fill="#9aa6b8"/><rect x="5" y="13" width="5" height="1.5" fill="#8899aa"/><rect x="3" y="14.5" width="9" height="1.2" fill="#9ab"/></svg><span class="t" style="left:1258.0px;top:337.8px;font-size:12.5px;color:#1c1c1c;letter-spacing:-0.35px;">Персонализация</span><div class="r" style="left:1451px;top:237px;width:249px;height:230.5px;background:#ece8f3;border-radius:8px;box-shadow:0 8px 20px rgba(20,0,60,.35),0 0 1px rgba(0,0,0,.35);"></div><div class="r" style="left:1456px;top:244px;width:239px;height:19.5px;background:#0a78d4;border-radius:4px;"></div><svg class="r" style="left:1462px;top:245px;" width="17" height="16" viewBox="0 0 17 16"><rect x="0" y="3" width="15" height="10" rx="1" fill="#2a46d6"/><rect x="1.5" y="4.5" width="12" height="7" fill="#6f4fe0"/><circle cx="7" cy="8" r="2.4" fill="#dfe8ff"/><path d="M9,9 L16.5,0.5 L15,5 Z" fill="#9aa6b8"/><rect x="5" y="13" width="5" height="1.5" fill="#8899aa"/><rect x="3" y="14.5" width="9" height="1.2" fill="#9ab"/></svg><span class="t" style="left:1486.0px;top:247.8px;font-size:12.5px;color:#fff;letter-spacing:-0.35px;">Персонализация</span><svg class="r" style="left:1462px;top:268px;" width="17" height="16" viewBox="0 0 17 16"><defs><linearGradient id="wl" x1="0" y1="0" x2="1" y2="1"><stop offset="0" stop-color="#3fc2d8"/><stop offset="1" stop-color="#1b8fc0"/></linearGradient></defs><rect x="0" y="2" width="16" height="11" rx="1.2" fill="url(#wl)"/></svg><span class="t" style="left:1486.0px;top:270.8px;font-size:12.5px;color:#1c1c1c;letter-spacing:-0.08px;">Фоновый рисунок</span><svg class="r" style="left:1462px;top:291px;" width="17" height="16" viewBox="0 0 17 16"><rect x="0" y="3" width="15" height="10" rx="1" fill="#2a46d6"/><rect x="1.5" y="4.5" width="12" height="7" fill="#6f4fe0"/><circle cx="7" cy="8" r="2.4" fill="#dfe8ff"/><path d="M9,9 L16.5,0.5 L15,5 Z" fill="#9aa6b8"/><rect x="5" y="13" width="5" height="1.5" fill="#8899aa"/><rect x="3" y="14.5" width="9" height="1.2" fill="#9ab"/></svg><span class="t" style="left:1486.0px;top:293.8px;font-size:12.5px;color:#1c1c1c;letter-spacing:-0.56px;">Цвета</span><svg class="r" style="left:1462px;top:314px;" width="17" height="16" viewBox="0 0 17 16"><path d="M2,6 H5 L10,1.5 V14.5 L5,10 H2 Z" fill="#b9b9b9" stroke="#8a8a8a" stroke-width=".7"/><path d="M7,4 V12" stroke="#8a8a8a" stroke-width=".7"/></svg><span class="t" style="left:1486.0px;top:316.8px;font-size:12.5px;color:#1c1c1c;letter-spacing:-0.12px;">Звуки</span><svg class="r" style="left:1462px;top:337px;" width="17" height="16" viewBox="0 0 17 16"><rect x="0" y="0.5" width="16" height="11.5" rx="1" fill="#b4c2c8"/><rect x="1.5" y="2" width="13" height="8.5" fill="#3fb4a0"/><circle cx="6" cy="5" r="1.8" fill="#d8f4ff"/><circle cx="10" cy="7" r="2.2" fill="#8fd8f8"/><rect x="6" y="12" width="4" height="2" fill="#9aa"/><rect x="3" y="14" width="10" height="1.6" fill="#b4c2c8"/></svg><span class="t" style="left:1486.0px;top:339.8px;font-size:12.5px;color:#1c1c1c;letter-spacing:-0.54px;">Экранная заставка</span><div class="r" style="left:1462px;top:361px;width:228px;height:1px;background:#d6d1de;"></div><svg class="r" style="left:1462px;top:367px;" width="17" height="16" viewBox="0 0 17 16"><rect x="0" y="1" width="15" height="10.5" rx="1" fill="#2f5fc0"/><rect x="1.3" y="2.3" width="12.4" height="7.9" fill="#3da050"/><path d="M1.3,10.2 L7,4 L13.7,10.2 Z" fill="#2a46d6"/><path d="M8,9 L16.5,0 L14,6 Z" fill="#cfd6de"/><rect x="5.5" y="11.5" width="4" height="2" fill="#9aa"/><rect x="3" y="13.5" width="9" height="1.6" fill="#9ab"/></svg><span class="t" style="left:1486.0px;top:369.8px;font-size:12.5px;color:#1c1c1c;letter-spacing:-0.25px;">Значки раб. стола</span><svg class="r" style="left:1465px;top:390px;" width="11" height="17" viewBox="0 0 11 17"><rect x="1" y="0.8" width="9" height="15" rx="4.5" fill="#b8b8b8" stroke="#3a3a3a" stroke-width="1.4"/><path d="M5.5,1 V7" stroke="#3a3a3a" stroke-width="1.2"/></svg><span class="t" style="left:1486.0px;top:392.8px;font-size:12.5px;color:#1c1c1c;letter-spacing:-0.09px;">Курсоры</span><div class="r" style="left:1462px;top:414px;width:228px;height:1px;background:#d6d1de;"></div><svg class="r" style="left:1462px;top:421px;" width="17" height="16" viewBox="0 0 17 16"><rect x="2" y="0.6" width="12.5" height="8.5" fill="#e9e9e9" stroke="#4a4a4a" stroke-width="1.1"/><rect x="4" y="2.4" width="8.5" height="4.8" fill="#fff" stroke="#6a6a6a" stroke-width=".6"/><rect x="0.6" y="10.5" width="15.3" height="4.6" fill="#e2e2e2" stroke="#4a4a4a" stroke-width="1.1"/><path d="M2.5,12.8 H5 M6.5,12.8 H9 M11,12.8 H14" stroke="#3a3a3a" stroke-width="1.4"/></svg><span class="t" style="left:1486.0px;top:422.8px;font-size:12.5px;color:#1c1c1c;letter-spacing:-0.24px;">Значки области уведомлений</span><svg class="r" style="left:1462px;top:444px;" width="17" height="16" viewBox="0 0 17 16"><rect x="2" y="0.6" width="12.5" height="8.5" fill="#e9e9e9" stroke="#4a4a4a" stroke-width="1.1"/><rect x="4" y="2.4" width="8.5" height="4.8" fill="#fff" stroke="#6a6a6a" stroke-width=".6"/><rect x="0.6" y="10.5" width="15.3" height="4.6" fill="#e2e2e2" stroke="#4a4a4a" stroke-width="1.1"/><path d="M2.5,12.8 H5 M6.5,12.8 H9 M11,12.8 H14" stroke="#3a3a3a" stroke-width="1.4"/></svg><span class="t" style="left:1486.0px;top:445.8px;font-size:12.5px;color:#1c1c1c;letter-spacing:-0.25px;">Системные значки</span>
<!-- p_taskmgr -->
<div class="r" style="left:89px;top:466px;width:731px;height:510px;background:#fff;border-radius:8px;box-shadow:0 10px 28px rgba(0,0,20,.24),0 2px 6px rgba(0,0,20,.12),0 0 1px rgba(0,0,0,.4);"></div><svg class="r" style="left:97px;top:475px;" width="17" height="12" viewBox="0 0 17 12"><rect x=".5" y=".5" width="16" height="11" fill="#d9ecf7" stroke="#5f9cc4" stroke-width="1"/><path d="M1.5,9 L3.5,4 L5,8 L7,3 L9,9 L11,6 L12.5,8.5 L15.5,7.5 V11 H1.5 Z" fill="#7fb8dc" stroke="#2f7fb4" stroke-width=".8"/></svg><span class="t" style="left:118.0px;top:475.1px;font-size:12.5px;color:#8c8c8c;letter-spacing:-0.39px;">Диспетчер задач</span><div class="r" style="left:712px;top:474px;width:14px;height:14px;background:#f6e58c;border-radius:50%;"></div><div class="r" style="left:751px;top:474px;width:14px;height:14px;background:#d48ff0;border-radius:50%;"></div><div class="r" style="left:790.5px;top:474px;width:14px;height:14px;background:#f6a9a2;border-radius:50%;"></div><span class="t" style="left:97.0px;top:500.1px;font-size:12.5px;color:#6d6d6d;letter-spacing:-0.93px;">Файл</span><span class="t" style="left:139.0px;top:500.1px;font-size:12.5px;color:#6d6d6d;letter-spacing:-0.29px;">Параметры</span><span class="t" style="left:217.0px;top:500.1px;font-size:12.5px;color:#6d6d6d;letter-spacing:-0.87px;">Вид</span><div class="r" style="left:90px;top:518px;width:729px;height:1px;background:#f0f0f0;"></div><div class="r" style="left:92px;top:521px;width:644px;height:21px;background:#f6f6f6;border:1px solid #efefef;"></div><div class="r" style="left:160px;top:521px;width:1px;height:21px;background:#ebebeb;"></div><div class="r" style="left:288px;top:521px;width:1px;height:21px;background:#ebebeb;"></div><div class="r" style="left:418px;top:521px;width:1px;height:21px;background:#ebebeb;"></div><div class="r" style="left:502px;top:521px;width:1px;height:21px;background:#ebebeb;"></div><div class="r" style="left:592px;top:521px;width:1px;height:21px;background:#ebebeb;"></div><div class="r" style="left:679px;top:521px;width:1px;height:21px;background:#ebebeb;"></div><div class="r" style="left:159px;top:518px;width:130px;height:25px;background:#fff;border:1px solid #ececec;border-bottom:none;"></div><div class="r" style="left:90px;top:542px;width:729px;height:1px;background:#e9e9e9;"></div><div class="r" style="left:160px;top:542px;width:128px;height:1px;background:#fff;"></div><span class="t" style="left:97.0px;top:525.1px;font-size:12.5px;color:#1a1a1a;letter-spacing:-0.17px;">Процессы</span><span class="t" style="left:166.0px;top:523.1px;font-size:12.5px;color:#1a1a1a;letter-spacing:-0.30px;">Производительность</span><span class="t" style="left:294.0px;top:525.1px;font-size:12.5px;color:#1a1a1a;letter-spacing:-0.13px;">Журнал приложений</span><span class="t" style="left:424.0px;top:525.1px;font-size:12.5px;color:#1a1a1a;letter-spacing:-0.32px;">Автозагрузка</span><span class="t" style="left:508.0px;top:525.1px;font-size:12.5px;color:#1a1a1a;letter-spacing:-0.30px;">Пользователи</span><span class="t" style="left:598.0px;top:525.1px;font-size:12.5px;color:#1a1a1a;letter-spacing:-0.17px;">Подробности</span><span class="t" style="left:685.0px;top:525.1px;font-size:12.5px;color:#1a1a1a;letter-spacing:-0.23px;">Службы</span><div class="r" style="left:93px;top:553px;width:187px;height:59px;background:#d9d9d9;"></div><div class="r" style="left:284px;top:553px;width:17px;height:375px;background:#f3f3f3;"></div><div class="r" style="left:291px;top:571px;width:2px;height:333px;background:#a294c8;border-radius:1px;"></div><div class="r" style="left:103px;top:563px;width:60px;height:40px;background:#fff;border:1px solid #4a9ccc;"></div><span class="t" style="left:174.0px;top:562.0px;font-size:15.5px;color:#1a1a1a;letter-spacing:-0.30px;">ЦП</span><span class="t" style="left:174.0px;top:580.9px;font-size:12px;color:#1a1a1a;letter-spacing:-0.55px;">2%  1,09 ГГц</span><div class="r" style="left:103px;top:623px;width:60px;height:40px;background:#fff;border:1px solid #8f35a8;"></div><span class="t" style="left:174.0px;top:622.0px;font-size:15.5px;color:#1a1a1a;letter-spacing:-0.33px;">Память</span><span class="t" style="left:174.0px;top:640.9px;font-size:12px;color:#1a1a1a;letter-spacing:-0.33px;">1,8/15,9 ГБ (11%)</span><div class="r" style="left:103px;top:683px;width:60px;height:46px;background:#fff;border:1px solid #86a546;"></div><span class="t" style="left:174.0px;top:682.0px;font-size:15.5px;color:#1a1a1a;letter-spacing:-0.48px;">Диск 0 (C: E:)</span><span class="t" style="left:174.0px;top:700.9px;font-size:12px;color:#1a1a1a;letter-spacing:-1.89px;">SSD</span><span class="t" style="left:174.0px;top:716.4px;font-size:12px;color:#1a1a1a;letter-spacing:-0.67px;">0%</span><div class="r" style="left:103px;top:749px;width:60px;height:46px;background:#fff;border:1px solid #86a546;"></div><span class="t" style="left:174.0px;top:748.0px;font-size:15.5px;color:#1a1a1a;letter-spacing:-0.16px;">Диск 1 (D:)</span><span class="t" style="left:174.0px;top:766.9px;font-size:12px;color:#1a1a1a;letter-spacing:0.12px;">Сменный</span><span class="t" style="left:174.0px;top:782.4px;font-size:12px;color:#1a1a1a;letter-spacing:-0.67px;">0%</span><div class="r" style="left:103px;top:815px;width:60px;height:46px;background:#fff;border:1px solid #b8905a;"></div><span class="t" style="left:174.0px;top:814.0px;font-size:15.5px;color:#1a1a1a;letter-spacing:-0.20px;">Ethernet</span><span class="t" style="left:174.0px;top:832.9px;font-size:12px;color:#1a1a1a;letter-spacing:-0.17px;">Ethernet</span><span class="t" style="left:174.0px;top:848.4px;font-size:12px;color:#1a1a1a;letter-spacing:0.11px;">О: 0 П: 0 кбит/с</span><div class="r" style="left:103px;top:881px;width:60px;height:46px;background:#fff;border:1px solid #3f8db4;"></div><span class="t" style="left:174.0px;top:880.0px;font-size:15.5px;color:#1a1a1a;letter-spacing:-0.50px;">Графический пр</span><span class="t" style="left:174.0px;top:898.9px;font-size:12px;color:#1a1a1a;letter-spacing:-0.46px;">NVIDIA GeForce GTX</span><span class="t" style="left:174.0px;top:914.4px;font-size:12px;color:#1a1a1a;letter-spacing:-0.56px;">1%  (34 °C)</span><svg class="r" style="left:104px;top:590px;" width="58" height="12" viewBox="0 0 58 12"><path d="M0,11.5 H3 L5,9 L7,11 H9 L11,6.5 L13,10.5 H16 L18,9 L20,11 L22,10 L24,11.5 H38 L39,10.5 L40,11.5 H58" fill="none" stroke="#4a9ccc" stroke-width="1"/></svg><div class="r" style="left:104px;top:656.5px;width:58px;height:1px;background:#8f35a8;"></div><svg class="r" style="left:104px;top:915px;" width="58" height="10" viewBox="0 0 58 10"><path d="M0,9.5 H9 L10.5,4 L12,9 H14 L15,8 L16,9.5 H18 L19,8.5 L20,9.5 H58" fill="none" stroke="#3f8db4" stroke-width="1"/></svg><div class="r" style="left:283px;top:880px;width:18px;height:48px;background:#f3f3f3;"></div><span class="t" style="left:327.0px;top:560.5px;font-size:30px;color:#1a1a1a;letter-spacing:-2.88px;-webkit-text-stroke:.55px #fff;">ЦП</span><span class="t" style="left:502.0px;top:573.3px;font-size:16px;color:#1a1a1a;letter-spacing:-0.40px;">Intel(R) Core(TM) i7-4770 CPU @ 3.40GHz</span><span class="t" style="left:327.0px;top:600.8px;font-size:11.5px;color:#8a8a8a;letter-spacing:-0.24px;">Используется %</span><span class="t" style="left:769.0px;top:600.8px;font-size:11.5px;color:#8a8a8a;letter-spacing:-0.60px;">100%</span><svg class="r" style="left:327px;top:615px;" width="469" height="107" viewBox="0 0 469 107"><rect x=".5" y=".5" width="468" height="106" fill="#fff" stroke="#3c8fb8" stroke-width="1"/><path d="M16.5,1 V106" stroke="#dbe9f1" stroke-width="1"/><path d="M48.2,1 V106" stroke="#dbe9f1" stroke-width="1"/><path d="M79.9,1 V106" stroke="#dbe9f1" stroke-width="1"/><path d="M111.6,1 V106" stroke="#dbe9f1" stroke-width="1"/><path d="M143.3,1 V106" stroke="#dbe9f1" stroke-width="1"/><path d="M175.0,1 V106" stroke="#dbe9f1" stroke-width="1"/><path d="M206.7,1 V106" stroke="#dbe9f1" stroke-width="1"/><path d="M238.4,1 V106" stroke="#dbe9f1" stroke-width="1"/><path d="M270.1,1 V106" stroke="#dbe9f1" stroke-width="1"/><path d="M301.8,1 V106" stroke="#dbe9f1" stroke-width="1"/><path d="M333.5,1 V106" stroke="#dbe9f1" stroke-width="1"/><path d="M365.2,1 V106" stroke="#dbe9f1" stroke-width="1"/><path d="M396.9,1 V106" stroke="#dbe9f1" stroke-width="1"/><path d="M428.6,1 V106" stroke="#dbe9f1" stroke-width="1"/><path d="M460.3,1 V106" stroke="#dbe9f1" stroke-width="1"/><path d="M1,11.1 H468" stroke="#dbe9f1" stroke-width="1"/><path d="M1,21.7 H468" stroke="#dbe9f1" stroke-width="1"/><path d="M1,32.3 H468" stroke="#dbe9f1" stroke-width="1"/><path d="M1,42.9 H468" stroke="#dbe9f1" stroke-width="1"/><path d="M1,53.5 H468" stroke="#dbe9f1" stroke-width="1"/><path d="M1,64.1 H468" stroke="#dbe9f1" stroke-width="1"/><path d="M1,74.7 H468" stroke="#dbe9f1" stroke-width="1"/><path d="M1,85.3 H468" stroke="#dbe9f1" stroke-width="1"/><path d="M1,95.9 H468" stroke="#dbe9f1" stroke-width="1"/><path d="M1,104 L20,104 L28,103 L38,104.5 L48,102.5 L58,104 L70,103.5 L79,94 L88,100 L100,103 L140,103.5 L150,102 L160,104 L172,101 L182,104 L250,104.5 L300,104 L350,104.5 L400,104 L430,104.5 L455,103 L468,104.5 L468,106 L1,106 Z" fill="#e4f1f8"/><path d="M1,104 L20,104 L28,103 L38,104.5 L48,102.5 L58,104 L70,103.5 L79,94 L88,100 L100,103 L140,103.5 L150,102 L160,104 L172,101 L182,104 L250,104.5 L300,104 L350,104.5 L400,104 L430,104.5 L455,103 L468,104.5" fill="none" stroke="#3c8fb8" stroke-width="1"/></svg><span class="t" style="left:327.0px;top:725.8px;font-size:11.5px;color:#8a8a8a;letter-spacing:0.10px;">60 секунд</span><span class="t" style="left:789.6px;top:725.8px;font-size:11.5px;color:#8a8a8a;">0</span><span class="t" style="left:327.0px;top:749.1px;font-size:12.5px;color:#8a8a8a;letter-spacing:-0.26px;">Использование</span><span class="t" style="left:433.0px;top:749.1px;font-size:12.5px;color:#8a8a8a;letter-spacing:-0.25px;">Скорость</span><span class="t" style="left:327.0px;top:768.6px;font-size:20px;color:#1a1a1a;letter-spacing:-0.95px;-webkit-text-stroke:.3px #fff;">2%</span><span class="t" style="left:433.0px;top:768.6px;font-size:20px;color:#1a1a1a;letter-spacing:-0.70px;-webkit-text-stroke:.3px #fff;">1,09 ГГц</span><span class="t" style="left:327.0px;top:800.1px;font-size:12.5px;color:#8a8a8a;letter-spacing:-0.29px;">Процессы</span><span class="t" style="left:404.0px;top:800.1px;font-size:12.5px;color:#8a8a8a;letter-spacing:-0.11px;">Потоки</span><span class="t" style="left:468.0px;top:800.1px;font-size:12.5px;color:#8a8a8a;letter-spacing:-0.12px;">Дескрипторы</span><span class="t" style="left:327.0px;top:819.6px;font-size:20px;color:#1a1a1a;letter-spacing:-0.46px;-webkit-text-stroke:.3px #fff;">103</span><span class="t" style="left:404.0px;top:819.6px;font-size:20px;color:#1a1a1a;-webkit-text-stroke:.3px #fff;">1105</span><span class="t" style="left:468.0px;top:819.6px;font-size:20px;color:#1a1a1a;letter-spacing:-0.12px;-webkit-text-stroke:.3px #fff;">40516</span><span class="t" style="left:327.0px;top:851.1px;font-size:12.5px;color:#8a8a8a;letter-spacing:-0.38px;">Время работы</span><span class="t" style="left:327.0px;top:870.6px;font-size:20px;color:#1a1a1a;letter-spacing:-0.65px;-webkit-text-stroke:.3px #fff;">0:00:04:39</span><span class="t" style="left:555.0px;top:749.4px;font-size:12px;color:#8a8a8a;letter-spacing:-0.16px;">Базовая скорость:</span><span class="t" style="left:713.0px;top:749.4px;font-size:12px;color:#1a1a1a;letter-spacing:-0.32px;">3,40 ГГц</span><span class="t" style="left:555.0px;top:767.4px;font-size:12px;color:#8a8a8a;letter-spacing:-0.09px;">Сокетов:</span><span class="t" style="left:713.0px;top:767.4px;font-size:12px;color:#1a1a1a;">1</span><span class="t" style="left:555.0px;top:785.3px;font-size:12px;color:#8a8a8a;letter-spacing:-0.87px;">Ядра:</span><span class="t" style="left:713.0px;top:785.3px;font-size:12px;color:#1a1a1a;">4</span><span class="t" style="left:555.0px;top:803.3px;font-size:12px;color:#8a8a8a;letter-spacing:0.09px;">Логических процессоров:</span><span class="t" style="left:713.0px;top:803.3px;font-size:12px;color:#1a1a1a;">8</span><span class="t" style="left:555.0px;top:821.2px;font-size:12px;color:#8a8a8a;letter-spacing:-0.26px;">Виртуализация:</span><span class="t" style="left:713.0px;top:821.2px;font-size:12px;color:#1a1a1a;letter-spacing:0.20px;">Отключено</span><span class="t" style="left:555.0px;top:839.2px;font-size:12px;color:#8a8a8a;letter-spacing:-0.10px;">Поддержка Hyper-V:</span><span class="t" style="left:713.0px;top:839.2px;font-size:12px;color:#1a1a1a;letter-spacing:-0.40px;">Да</span><span class="t" style="left:555.0px;top:857.1px;font-size:12px;color:#8a8a8a;letter-spacing:-0.25px;">Кэш L1:</span><span class="t" style="left:713.0px;top:857.1px;font-size:12px;color:#1a1a1a;letter-spacing:-0.54px;">256 КБ</span><span class="t" style="left:555.0px;top:875.1px;font-size:12px;color:#8a8a8a;letter-spacing:-0.25px;">Кэш L2:</span><span class="t" style="left:713.0px;top:875.1px;font-size:12px;color:#1a1a1a;letter-spacing:-0.31px;">1,0 МБ</span><span class="t" style="left:555.0px;top:893.0px;font-size:12px;color:#8a8a8a;letter-spacing:-0.25px;">Кэш L3:</span><span class="t" style="left:713.0px;top:893.0px;font-size:12px;color:#1a1a1a;letter-spacing:-0.31px;">8,0 МБ</span><svg class="r" style="left:101px;top:948px;" width="11" height="8" viewBox="0 0 11 8"><path d="M1,6.5 L5.5,2 L10,6.5" fill="none" stroke="#555" stroke-width="1.1"/></svg><span class="t" style="left:123.0px;top:947.1px;font-size:12.5px;color:#1a1a1a;letter-spacing:-0.15px;">Меньше</span><div class="r" style="left:178px;top:945px;width:1px;height:16px;background:#dcdcdc;"></div><svg class="r" style="left:186px;top:944px;" width="16" height="16" viewBox="0 0 16 16"><circle cx="8" cy="8" r="7.3" fill="#f4f0ec" stroke="#9a948c" stroke-width="1.2"/><circle cx="8" cy="8" r="5.6" fill="#fbfaf8" stroke="#d8d2c8" stroke-width=".6"/><path d="M4.2,3.2 L9.2,10.2" stroke="#c8201c" stroke-width="1.8"/><path d="M9.2,10.2 L10.5,12" stroke="#555" stroke-width="1"/></svg><span class="t" style="left:208.0px;top:947.1px;font-size:12.5px;color:#6d6d6d;letter-spacing:-0.21px;">Открыть монитор ресурсов</span>
<!-- p_resmon -->
<div class="r" style="left:875px;top:550.5px;width:848px;height:453.5px;background:#f0f0f0;border-radius:8px;box-shadow:0 10px 28px rgba(0,0,20,.24),0 2px 6px rgba(0,0,20,.12),0 0 1px rgba(0,0,0,.4);"></div><div class="r" style="left:875px;top:550.5px;width:848px;height:48.5px;background:#fff;border-radius:8px 8px 0 0;"></div><div class="r" style="left:875px;top:627px;width:848px;height:1px;background:#fafafa;"></div><svg class="r" style="left:882px;top:557px;" width="17" height="17" viewBox="0 0 16 16"><circle cx="8" cy="8" r="7.3" fill="#f4f0ec" stroke="#9a948c" stroke-width="1.2"/><circle cx="8" cy="8" r="5.6" fill="#fbfaf8" stroke="#d8d2c8" stroke-width=".6"/><path d="M4.2,3.2 L9.2,10.2" stroke="#c8201c" stroke-width="1.8"/><path d="M9.2,10.2 L10.5,12" stroke="#555" stroke-width="1"/></svg><span class="t" style="left:904.0px;top:560.1px;font-size:12.5px;color:#8c8c8c;letter-spacing:-0.16px;">Монитор ресурсов</span><div class="r" style="left:1615px;top:559px;width:14px;height:14px;background:#f6e58c;border-radius:50%;"></div><div class="r" style="left:1654px;top:559px;width:14px;height:14px;background:#d48ff0;border-radius:50%;"></div><div class="r" style="left:1694px;top:559px;width:14px;height:14px;background:#f6a9a2;border-radius:50%;"></div><span class="t" style="left:882.0px;top:585.1px;font-size:12.5px;color:#6d6d6d;letter-spacing:-0.68px;">Файл</span><span class="t" style="left:925.0px;top:585.1px;font-size:12.5px;color:#6d6d6d;letter-spacing:0.02px;">Монитор</span><span class="t" style="left:990.0px;top:585.1px;font-size:12.5px;color:#6d6d6d;letter-spacing:-0.43px;">Справка</span><div class="r" style="left:877px;top:605px;width:243px;height:21px;background:#f3f3f3;border:1px solid #e9e9e9;"></div><div class="r" style="left:924px;top:605px;width:1px;height:21px;background:#e2e2e2;"></div><div class="r" style="left:1074px;top:605px;width:1px;height:21px;background:#e2e2e2;"></div><div class="r" style="left:972px;top:603px;width:56px;height:24px;background:#fbfbfb;border:1px solid #e2e2e2;border-bottom:none;"></div><span class="t" style="left:884.0px;top:610.1px;font-size:12.5px;color:#1a1a1a;letter-spacing:-0.42px;">Обзор</span><span class="t" style="left:932.0px;top:610.1px;font-size:12.5px;color:#1a1a1a;letter-spacing:-0.12px;">ЦП</span><span class="t" style="left:980.0px;top:608.1px;font-size:12.5px;color:#1a1a1a;letter-spacing:-0.42px;">Память</span><span class="t" style="left:1033.0px;top:610.1px;font-size:12.5px;color:#1a1a1a;letter-spacing:-0.04px;">Диск</span><span class="t" style="left:1081.0px;top:610.1px;font-size:12.5px;color:#1a1a1a;letter-spacing:-0.70px;">Сеть</span><div class="r" style="left:876px;top:633px;width:605px;height:174px;background:#fff;border:1px solid #8a8a8a;"></div><div class="r" style="left:876px;top:633px;width:605px;height:29px;background:linear-gradient(180deg,#fdfdfd 0%,#efefef 35%,#d2d2d2 70%,#b2b2b2 100%);border:1px solid #858585;"></div><span class="t" style="left:883.0px;top:641.3px;font-size:14px;color:#1a1a1a;letter-spacing:-0.79px;">Процессы</span><div class="r" style="left:1046px;top:641px;width:11px;height:13px;background:#0e7a1e;border:1px solid #0a5a14;border-bottom:2px solid #7fe08a;background-image:repeating-linear-gradient(90deg,rgba(0,0,0,.25) 0 1px,transparent 1px 3px),repeating-linear-gradient(0deg,rgba(0,0,0,.25) 0 1px,transparent 1px 3px);"></div><span class="t" style="left:1063.0px;top:642.4px;font-size:12px;color:#1a1a1a;letter-spacing:-0.24px;">Использование физической памяти: 10%</span><svg class="r" style="left:1450.5px;top:638.5px;" width="19" height="19" viewBox="0 0 19 19"><circle cx="9.5" cy="9.5" r="8.5" fill="#f6f6f6" stroke="#8c8c8c" stroke-width="1"/><path d="M5.5,11.5 L9.5,7.5 L13.5,11.5" fill="none" stroke="#222" stroke-width="1.8"/></svg><div class="r" style="left:1056px;top:663px;width:1px;height:143px;background:#ececec;"></div><div class="r" style="left:1106px;top:663px;width:1px;height:143px;background:#ececec;"></div><div class="r" style="left:1178px;top:663px;width:1px;height:143px;background:#ececec;"></div><div class="r" style="left:1249px;top:663px;width:1px;height:143px;background:#ececec;"></div><div class="r" style="left:1320px;top:663px;width:1px;height:143px;background:#ececec;"></div><div class="r" style="left:1391px;top:663px;width:1px;height:143px;background:#ececec;"></div><div class="r" style="left:1462px;top:663px;width:1px;height:143px;background:#ececec;"></div><div class="r" style="left:1471px;top:680px;width:2px;height:17px;background:#a294c8;border-radius:1px;"></div><svg class="r" style="left:1421px;top:663px;" width="9" height="5" viewBox="0 0 9 5"><path d="M1,1 L4.5,4 L8,1" fill="none" stroke="#aaa" stroke-width="1"/></svg><div class="r" style="left:881px;top:668px;width:13.5px;height:13.5px;background:#fdfdfd;border:1px solid #808080;border-radius:3.5px;"></div><span class="t" style="left:899.0px;top:669.4px;font-size:12px;color:#1a1a1a;letter-spacing:0.02px;">Образ</span><span class="t" style="left:1063.0px;top:669.4px;font-size:12px;color:#1a1a1a;letter-spacing:-0.37px;">ИД п...</span><span class="t" style="left:1116.0px;top:669.4px;font-size:12px;color:#1a1a1a;letter-spacing:-0.18px;">Ошибок ...</span><span class="t" style="left:1189.0px;top:669.4px;font-size:12px;color:#1a1a1a;letter-spacing:-0.58px;">Заверше...</span><span class="t" style="left:1256.0px;top:669.4px;font-size:12px;color:#1a1a1a;letter-spacing:-0.23px;">Рабочий ...</span><span class="t" style="left:1332.0px;top:669.4px;font-size:12px;color:#1a1a1a;letter-spacing:-0.38px;">Общий (...</span><span class="t" style="left:1400.0px;top:669.4px;font-size:12px;color:#1a1a1a;letter-spacing:-0.50px;">Частный ...</span><div class="r" style="left:881px;top:689px;width:13.5px;height:13.5px;background:#fdfdfd;border:1px solid #808080;border-radius:3.5px;"></div><span class="t" style="left:899.0px;top:690.4px;font-size:12px;color:#1a1a1a;letter-spacing:-0.43px;">MsMpEng.exe</span><span class="t" style="left:1063.0px;top:690.4px;font-size:12px;color:#1a1a1a;letter-spacing:-0.67px;">3144</span><span class="t" style="left:1164.3px;top:690.4px;font-size:12px;color:#1a1a1a;">0</span><span class="t" style="left:1203.5px;top:690.4px;font-size:12px;color:#1a1a1a;letter-spacing:-0.70px;">181 840</span><span class="t" style="left:1274.5px;top:690.4px;font-size:12px;color:#1a1a1a;letter-spacing:-0.70px;">132 732</span><span class="t" style="left:1352.0px;top:690.4px;font-size:12px;color:#1a1a1a;letter-spacing:-0.78px;">42 504</span><span class="t" style="left:1423.0px;top:690.4px;font-size:12px;color:#1a1a1a;letter-spacing:-0.78px;">90 228</span><div class="r" style="left:881px;top:706px;width:13.5px;height:13.5px;background:#fdfdfd;border:1px solid #808080;border-radius:3.5px;"></div><span class="t" style="left:899.0px;top:707.4px;font-size:12px;color:#1a1a1a;letter-spacing:-0.28px;">explorer.exe</span><span class="t" style="left:1063.0px;top:707.4px;font-size:12px;color:#1a1a1a;letter-spacing:-0.67px;">4656</span><span class="t" style="left:1164.3px;top:707.4px;font-size:12px;color:#1a1a1a;">0</span><span class="t" style="left:1203.5px;top:707.4px;font-size:12px;color:#1a1a1a;letter-spacing:-0.70px;">144 404</span><span class="t" style="left:1274.5px;top:707.4px;font-size:12px;color:#1a1a1a;letter-spacing:-0.70px;">200 632</span><span class="t" style="left:1345.5px;top:707.4px;font-size:12px;color:#1a1a1a;letter-spacing:-0.70px;">125 468</span><span class="t" style="left:1423.0px;top:707.4px;font-size:12px;color:#1a1a1a;letter-spacing:-0.78px;">75 164</span><div class="r" style="left:881px;top:723px;width:13.5px;height:13.5px;background:#fdfdfd;border:1px solid #808080;border-radius:3.5px;"></div><span class="t" style="left:899.0px;top:724.4px;font-size:12px;color:#1a1a1a;letter-spacing:-0.39px;">msedgewebview2.exe</span><span class="t" style="left:1063.0px;top:724.4px;font-size:12px;color:#1a1a1a;letter-spacing:-0.67px;">6600</span><span class="t" style="left:1164.3px;top:724.4px;font-size:12px;color:#1a1a1a;">0</span><span class="t" style="left:1210.0px;top:724.4px;font-size:12px;color:#1a1a1a;letter-spacing:-0.78px;">63 632</span><span class="t" style="left:1274.5px;top:724.4px;font-size:12px;color:#1a1a1a;letter-spacing:-0.70px;">102 756</span><span class="t" style="left:1352.0px;top:724.4px;font-size:12px;color:#1a1a1a;letter-spacing:-0.78px;">49 312</span><span class="t" style="left:1423.0px;top:724.4px;font-size:12px;color:#1a1a1a;letter-spacing:-0.78px;">53 444</span><div class="r" style="left:881px;top:740px;width:13.5px;height:13.5px;background:#fdfdfd;border:1px solid #808080;border-radius:3.5px;"></div><span class="t" style="left:899.0px;top:741.4px;font-size:12px;color:#1a1a1a;letter-spacing:-0.43px;">dwm.exe</span><span class="t" style="left:1063.0px;top:741.4px;font-size:12px;color:#1a1a1a;letter-spacing:-0.45px;">1160</span><span class="t" style="left:1164.3px;top:741.4px;font-size:12px;color:#1a1a1a;">0</span><span class="t" style="left:1210.0px;top:741.4px;font-size:12px;color:#1a1a1a;letter-spacing:-0.78px;">86 308</span><span class="t" style="left:1281.0px;top:741.4px;font-size:12px;color:#1a1a1a;letter-spacing:-0.78px;">77 036</span><span class="t" style="left:1352.0px;top:741.4px;font-size:12px;color:#1a1a1a;letter-spacing:-0.78px;">50 440</span><span class="t" style="left:1423.0px;top:741.4px;font-size:12px;color:#1a1a1a;letter-spacing:-0.78px;">26 596</span><div class="r" style="left:881px;top:757px;width:13.5px;height:13.5px;background:#fdfdfd;border:1px solid #808080;border-radius:3.5px;"></div><span class="t" style="left:899.0px;top:758.4px;font-size:12px;color:#1a1a1a;letter-spacing:-0.31px;">sidebar.exe</span><span class="t" style="left:1063.0px;top:758.4px;font-size:12px;color:#1a1a1a;letter-spacing:-0.67px;">6160</span><span class="t" style="left:1164.3px;top:758.4px;font-size:12px;color:#1a1a1a;">0</span><span class="t" style="left:1210.0px;top:758.4px;font-size:12px;color:#1a1a1a;letter-spacing:-0.78px;">38 520</span><span class="t" style="left:1281.0px;top:758.4px;font-size:12px;color:#1a1a1a;letter-spacing:-0.78px;">62 984</span><span class="t" style="left:1352.0px;top:758.4px;font-size:12px;color:#1a1a1a;letter-spacing:-0.78px;">38 620</span><span class="t" style="left:1423.0px;top:758.4px;font-size:12px;color:#1a1a1a;letter-spacing:-0.78px;">24 364</span><div class="r" style="left:881px;top:774px;width:13.5px;height:13.5px;background:#fdfdfd;border:1px solid #808080;border-radius:3.5px;"></div><span class="t" style="left:899.0px;top:775.4px;font-size:12px;color:#1a1a1a;letter-spacing:-0.49px;">Taskmgr.exe</span><span class="t" style="left:1063.0px;top:775.4px;font-size:12px;color:#1a1a1a;letter-spacing:-0.67px;">1412</span><span class="t" style="left:1164.3px;top:775.4px;font-size:12px;color:#1a1a1a;">0</span><span class="t" style="left:1210.0px;top:775.4px;font-size:12px;color:#1a1a1a;letter-spacing:-0.78px;">23 260</span><span class="t" style="left:1281.0px;top:775.4px;font-size:12px;color:#1a1a1a;letter-spacing:-0.78px;">53 188</span><span class="t" style="left:1352.0px;top:775.4px;font-size:12px;color:#1a1a1a;letter-spacing:-0.78px;">34 796</span><span class="t" style="left:1423.0px;top:775.4px;font-size:12px;color:#1a1a1a;letter-spacing:-0.78px;">18 392</span><div class="r" style="left:881px;top:791px;width:13.5px;height:13.5px;background:#fdfdfd;border:1px solid #808080;border-radius:3.5px;"></div><span class="t" style="left:899.0px;top:792.4px;font-size:12px;color:#1a1a1a;letter-spacing:-0.25px;">perfmon.exe</span><span class="t" style="left:1063.0px;top:792.4px;font-size:12px;color:#1a1a1a;letter-spacing:-0.67px;">1712</span><span class="t" style="left:1164.3px;top:792.4px;font-size:12px;color:#1a1a1a;">0</span><span class="t" style="left:1210.0px;top:792.4px;font-size:12px;color:#1a1a1a;letter-spacing:-0.78px;">18 452</span><span class="t" style="left:1281.0px;top:792.4px;font-size:12px;color:#1a1a1a;letter-spacing:-0.78px;">34 812</span><span class="t" style="left:1352.0px;top:792.4px;font-size:12px;color:#1a1a1a;letter-spacing:-0.78px;">17 716</span><span class="t" style="left:1423.0px;top:792.4px;font-size:12px;color:#1a1a1a;letter-spacing:-0.78px;">17 096</span><div class="r" style="left:877px;top:806px;width:603px;height:1px;background:#8a8a8a;"></div><div class="r" style="left:876px;top:813px;width:605px;height:186px;background:#fff;border:1px solid #8a8a8a;"></div><div class="r" style="left:876px;top:813px;width:605px;height:29px;background:linear-gradient(180deg,#fdfdfd 0%,#efefef 35%,#d2d2d2 70%,#b2b2b2 100%);border:1px solid #858585;"></div><span class="t" style="left:883.0px;top:821.3px;font-size:14px;color:#1a1a1a;letter-spacing:-0.57px;">Физическая память</span><div class="r" style="left:1046px;top:821px;width:11px;height:13px;background:#0e7a1e;border:1px solid #0a5a14;border-bottom:2px solid #7fe08a;background-image:repeating-linear-gradient(90deg,rgba(0,0,0,.25) 0 1px,transparent 1px 3px),repeating-linear-gradient(0deg,rgba(0,0,0,.25) 0 1px,transparent 1px 3px);"></div><span class="t" style="left:1063.0px;top:822.4px;font-size:12px;color:#1a1a1a;letter-spacing:-0.51px;">Используется: 1713 МБ</span><div class="r" style="left:1251px;top:821px;width:11px;height:13px;background:#8cc4ff;border:1px solid #3a6ab0;border-top:2px solid #1a3a90;"></div><span class="t" style="left:1268.0px;top:822.4px;font-size:12px;color:#1a1a1a;letter-spacing:-0.42px;">Доступно: 14501 МБ</span><svg class="r" style="left:1450.5px;top:818.5px;" width="19" height="19" viewBox="0 0 19 19"><circle cx="9.5" cy="9.5" r="8.5" fill="#f6f6f6" stroke="#8c8c8c" stroke-width="1"/><path d="M5.5,11.5 L9.5,7.5 L13.5,11.5" fill="none" stroke="#222" stroke-width="1.8"/></svg><div class="r" style="left:885px;top:859px;width:587px;height:23.5px;border:1px solid #8f9bb0;background:linear-gradient(180deg,#c8dcf6,#b4cdee 50%,#a9c4ea);"></div><div class="r" style="left:886px;top:860px;width:2px;height:21.5px;background:#a9a9a9;"></div><div class="r" style="left:888px;top:860px;width:60px;height:21.5px;background:linear-gradient(180deg,#93b81c,#86ae14 50%,#7aa20c);"></div><div class="r" style="left:948px;top:860px;width:3.5px;height:21.5px;background:#e09520;"></div><div class="r" style="left:951.5px;top:860px;width:30px;height:21.5px;background:linear-gradient(180deg,#4a8cdc,#3f7fd0);"></div><div class="r" style="left:916px;top:892px;width:13px;height:13px;background:#c8c8c8;border:1px solid rgba(0,0,0,.25);"></div><span class="t" style="left:933.0px;top:892.4px;font-size:12px;color:#1a1a1a;letter-spacing:-0.48px;">Зарезервирован</span><span class="t" style="left:933.0px;top:905.4px;font-size:12px;color:#1a1a1a;letter-spacing:-0.39px;">аппаратно</span><span class="t" style="left:933.0px;top:918.4px;font-size:12px;color:#1a1a1a;letter-spacing:-0.37px;">62 мегабайт</span><div class="r" style="left:1022px;top:892px;width:13px;height:13px;background:#8cb41a;border:1px solid rgba(0,0,0,.25);"></div><span class="t" style="left:1039.0px;top:892.4px;font-size:12px;color:#1a1a1a;letter-spacing:-0.51px;">Используется</span><span class="t" style="left:1039.0px;top:905.4px;font-size:12px;color:#1a1a1a;letter-spacing:-0.37px;">1713 мегабайт</span><div class="r" style="left:1128px;top:892px;width:13px;height:13px;background:#f09018;border:1px solid rgba(0,0,0,.25);"></div><span class="t" style="left:1145.0px;top:892.4px;font-size:12px;color:#1a1a1a;letter-spacing:-0.33px;">Изменено</span><span class="t" style="left:1145.0px;top:905.4px;font-size:12px;color:#1a1a1a;letter-spacing:-0.37px;">108 мегабайт</span><div class="r" style="left:1234px;top:892px;width:13px;height:13px;background:#3f7fd0;border:1px solid rgba(0,0,0,.25);"></div><span class="t" style="left:1251.0px;top:892.4px;font-size:12px;color:#1a1a1a;letter-spacing:-0.47px;">Ожидание</span><span class="t" style="left:1251.0px;top:905.4px;font-size:12px;color:#1a1a1a;letter-spacing:-0.37px;">826 мегабайт</span><div class="r" style="left:1340px;top:892px;width:13px;height:13px;background:#b9d1f0;border:1px solid rgba(0,0,0,.25);"></div><span class="t" style="left:1357.0px;top:892.4px;font-size:12px;color:#1a1a1a;letter-spacing:-0.27px;">Свободно</span><span class="t" style="left:1357.0px;top:905.4px;font-size:12px;color:#1a1a1a;letter-spacing:-0.38px;">13675 мегабайт</span><div class="r" style="left:1018px;top:890px;width:4px;height:18px;background:#fff;"></div><div class="r" style="left:1022px;top:892px;width:13px;height:13px;background:#8cb41a;border:1px solid rgba(0,0,0,.25);"></div><span class="t" style="left:1096.0px;top:939.4px;font-size:12px;color:#1a1a1a;letter-spacing:-0.30px;">Доступно</span><span class="t" style="left:1177.4px;top:939.4px;font-size:12px;color:#1a1a1a;letter-spacing:-0.38px;">14501 мегабайт</span><span class="t" style="left:1096.0px;top:952.4px;font-size:12px;color:#1a1a1a;letter-spacing:-0.30px;">Кэшировано</span><span class="t" style="left:1189.9px;top:952.4px;font-size:12px;color:#1a1a1a;letter-spacing:-0.37px;">934 мегабайт</span><span class="t" style="left:1096.0px;top:965.4px;font-size:12px;color:#1a1a1a;letter-spacing:-0.69px;">Всего</span><span class="t" style="left:1177.4px;top:965.4px;font-size:12px;color:#1a1a1a;letter-spacing:-0.38px;">16322 мегабайт</span><span class="t" style="left:1096.0px;top:978.4px;font-size:12px;color:#1a1a1a;letter-spacing:-0.38px;">Установлено</span><span class="t" style="left:1177.4px;top:978.4px;font-size:12px;color:#1a1a1a;letter-spacing:-0.38px;">16384 мегабайт</span><div class="r" style="left:1490.5px;top:648px;width:2px;height:340px;background:#a294c8;border-radius:1px;"></div><div class="r" style="left:1499px;top:633px;width:1px;height:371px;background:#c9c9c9;"></div><div class="r" style="left:1505px;top:633px;width:200px;height:372px;background:#fff;border:1px solid #8a8a8a;border-bottom:none;"></div><div class="r" style="left:1505px;top:633px;width:200px;height:29px;background:linear-gradient(180deg,#fdfdfd 0%,#efefef 35%,#d2d2d2 70%,#b2b2b2 100%);border:1px solid #858585;"></div><svg class="r" style="left:1515.5px;top:638.5px;" width="19" height="19" viewBox="0 0 19 19"><circle cx="9.5" cy="9.5" r="8.5" fill="#f6f6f6" stroke="#8c8c8c" stroke-width="1"/><path d="M8,5.5 L12,9.5 L8,13.5" fill="none" stroke="#222" stroke-width="1.8"/></svg><div class="r" style="left:1606px;top:637px;width:85px;height:22.5px;border:1px solid #9a9a9a;border-radius:4px;background:linear-gradient(180deg,#dadada,#c3c3c3);"></div><div class="r" style="left:1676.5px;top:640px;width:1px;height:17px;background:#6a6a6a;"></div><span class="t" style="left:1630.0px;top:642.1px;font-size:12.5px;color:#1a1a1a;letter-spacing:-0.87px;">Вид</span><svg class="r" style="left:1679px;top:645px;" width="9" height="6" viewBox="0 0 9 6"><path d="M0,0.5 H9 L4.5,5.5 Z" fill="#111"/></svg><div class="r" style="left:1714.5px;top:648px;width:2px;height:277px;background:#a294c8;border-radius:1px;"></div><span class="t" style="left:1518.0px;top:669.4px;font-size:12px;color:#1a1a1a;letter-spacing:-0.10px;">Использование физич...</span><span class="t" style="left:1657.0px;top:669.4px;font-size:12px;color:#1a1a1a;letter-spacing:-0.92px;">100%</span><svg class="r" style="left:1517px;top:685px;" width="170" height="101.5" viewBox="0 0 170 101.5"><rect width="170" height="101.5" fill="#000"/><rect x="0" y="91.0" width="170" height="10.5" fill="#0a8212"/><path d="M0,91.5 H170" stroke="#22e040" stroke-width="1.2"/><path d="M4.5,0 V101.5" stroke="#1d7430" stroke-width="1"/><path d="M19.5,0 V101.5" stroke="#1d7430" stroke-width="1"/><path d="M34.5,0 V101.5" stroke="#1d7430" stroke-width="1"/><path d="M49.5,0 V101.5" stroke="#1d7430" stroke-width="1"/><path d="M64.5,0 V101.5" stroke="#1d7430" stroke-width="1"/><path d="M79.5,0 V101.5" stroke="#1d7430" stroke-width="1"/><path d="M94.5,0 V101.5" stroke="#1d7430" stroke-width="1"/><path d="M109.5,0 V101.5" stroke="#1d7430" stroke-width="1"/><path d="M124.5,0 V101.5" stroke="#1d7430" stroke-width="1"/><path d="M139.5,0 V101.5" stroke="#1d7430" stroke-width="1"/><path d="M154.5,0 V101.5" stroke="#1d7430" stroke-width="1"/><path d="M169.5,0 V101.5" stroke="#1d7430" stroke-width="1"/><path d="M0,10.5 H170" stroke="#1d7430" stroke-width="1"/><path d="M0,20.5 H170" stroke="#1d7430" stroke-width="1"/><path d="M0,30.5 H170" stroke="#1d7430" stroke-width="1"/><path d="M0,40.5 H170" stroke="#1d7430" stroke-width="1"/><path d="M0,50.5 H170" stroke="#1d7430" stroke-width="1"/><path d="M0,60.5 H170" stroke="#1d7430" stroke-width="1"/><path d="M0,70.5 H170" stroke="#1d7430" stroke-width="1"/><path d="M0,80.5 H170" stroke="#1d7430" stroke-width="1"/><path d="M0,90.5 H170" stroke="#1d7430" stroke-width="1"/><rect x=".5" y=".5" width="169" height="100.5" fill="none" stroke="#9a9a9a" stroke-width="1"/></svg><span class="t" style="left:1518.0px;top:790.4px;font-size:12px;color:#1a1a1a;letter-spacing:-0.26px;">60 секунд</span><span class="t" style="left:1668.0px;top:790.4px;font-size:12px;color:#1a1a1a;letter-spacing:-0.67px;">0%</span><svg class="r" style="left:1689px;top:674px;" width="6" height="124" viewBox="0 0 6 124"><path d="M0,1 H4.5 V122.5 H0" fill="none" stroke="#222" stroke-width="1"/></svg><span class="t" style="left:1518.0px;top:807.4px;font-size:12px;color:#1a1a1a;letter-spacing:-0.25px;">Выделение памяти</span><span class="t" style="left:1657.0px;top:807.4px;font-size:12px;color:#1a1a1a;letter-spacing:-0.92px;">100%</span><svg class="r" style="left:1517px;top:823px;" width="170" height="101.5" viewBox="0 0 170 101.5"><rect width="170" height="101.5" fill="#000"/><rect x="0" y="84.5" width="170" height="17" fill="#0a8212"/><path d="M0,85.0 H170" stroke="#22e040" stroke-width="1.2"/><path d="M4.5,0 V101.5" stroke="#1d7430" stroke-width="1"/><path d="M19.5,0 V101.5" stroke="#1d7430" stroke-width="1"/><path d="M34.5,0 V101.5" stroke="#1d7430" stroke-width="1"/><path d="M49.5,0 V101.5" stroke="#1d7430" stroke-width="1"/><path d="M64.5,0 V101.5" stroke="#1d7430" stroke-width="1"/><path d="M79.5,0 V101.5" stroke="#1d7430" stroke-width="1"/><path d="M94.5,0 V101.5" stroke="#1d7430" stroke-width="1"/><path d="M109.5,0 V101.5" stroke="#1d7430" stroke-width="1"/><path d="M124.5,0 V101.5" stroke="#1d7430" stroke-width="1"/><path d="M139.5,0 V101.5" stroke="#1d7430" stroke-width="1"/><path d="M154.5,0 V101.5" stroke="#1d7430" stroke-width="1"/><path d="M169.5,0 V101.5" stroke="#1d7430" stroke-width="1"/><path d="M0,10.5 H170" stroke="#1d7430" stroke-width="1"/><path d="M0,20.5 H170" stroke="#1d7430" stroke-width="1"/><path d="M0,30.5 H170" stroke="#1d7430" stroke-width="1"/><path d="M0,40.5 H170" stroke="#1d7430" stroke-width="1"/><path d="M0,50.5 H170" stroke="#1d7430" stroke-width="1"/><path d="M0,60.5 H170" stroke="#1d7430" stroke-width="1"/><path d="M0,70.5 H170" stroke="#1d7430" stroke-width="1"/><path d="M0,80.5 H170" stroke="#1d7430" stroke-width="1"/><path d="M0,90.5 H170" stroke="#1d7430" stroke-width="1"/><rect x=".5" y=".5" width="169" height="100.5" fill="none" stroke="#9a9a9a" stroke-width="1"/></svg><span class="t" style="left:1668.0px;top:928.4px;font-size:12px;color:#1a1a1a;letter-spacing:-0.67px;">0%</span><svg class="r" style="left:1689px;top:812px;" width="6" height="124" viewBox="0 0 6 124"><path d="M0,1 H4.5 V122.5 H0" fill="none" stroke="#222" stroke-width="1"/></svg><span class="t" style="left:1518.0px;top:945.4px;font-size:12px;color:#1a1a1a;letter-spacing:-0.03px;">Ошибок страницы физи...</span><span class="t" style="left:1666.0px;top:945.4px;font-size:12px;color:#1a1a1a;letter-spacing:-0.67px;">100</span><svg class="r" style="left:1517px;top:961px;" width="170" height="43" viewBox="0 0 170 43"><rect width="170" height="101.5" fill="#000"/><path d="M4.5,0 V101.5" stroke="#1d7430" stroke-width="1"/><path d="M19.5,0 V101.5" stroke="#1d7430" stroke-width="1"/><path d="M34.5,0 V101.5" stroke="#1d7430" stroke-width="1"/><path d="M49.5,0 V101.5" stroke="#1d7430" stroke-width="1"/><path d="M64.5,0 V101.5" stroke="#1d7430" stroke-width="1"/><path d="M79.5,0 V101.5" stroke="#1d7430" stroke-width="1"/><path d="M94.5,0 V101.5" stroke="#1d7430" stroke-width="1"/><path d="M109.5,0 V101.5" stroke="#1d7430" stroke-width="1"/><path d="M124.5,0 V101.5" stroke="#1d7430" stroke-width="1"/><path d="M139.5,0 V101.5" stroke="#1d7430" stroke-width="1"/><path d="M154.5,0 V101.5" stroke="#1d7430" stroke-width="1"/><path d="M169.5,0 V101.5" stroke="#1d7430" stroke-width="1"/><path d="M0,10.5 H170" stroke="#1d7430" stroke-width="1"/><path d="M0,20.5 H170" stroke="#1d7430" stroke-width="1"/><path d="M0,30.5 H170" stroke="#1d7430" stroke-width="1"/><path d="M0,40.5 H170" stroke="#1d7430" stroke-width="1"/><path d="M0,50.5 H170" stroke="#1d7430" stroke-width="1"/><path d="M0,60.5 H170" stroke="#1d7430" stroke-width="1"/><path d="M0,70.5 H170" stroke="#1d7430" stroke-width="1"/><path d="M0,80.5 H170" stroke="#1d7430" stroke-width="1"/><path d="M0,90.5 H170" stroke="#1d7430" stroke-width="1"/><rect x=".5" y=".5" width="169" height="100.5" fill="none" stroke="#9a9a9a" stroke-width="1"/></svg><svg class="r" style="left:1689px;top:950px;" width="6" height="54" viewBox="0 0 6 54"><path d="M0,1 H4.5 V54" fill="none" stroke="#222" stroke-width="1"/></svg>
<!-- p_widgets -->
<span class="t" style="left:1564.0px;top:9.6px;font-size:106px;color:rgba(255,255,255,.36);letter-spacing:-0.65px;">20:29</span><span class="t" style="left:1575.0px;top:105.1px;font-size:44px;color:rgba(255,255,255,.36);letter-spacing:-0.11px;">октябрь</span><span class="t" style="left:1744.0px;top:98.7px;font-size:81px;color:rgba(255,255,255,.36);letter-spacing:-6.55px;">15</span><span class="t" style="left:1624.0px;top:146.3px;font-size:27px;color:rgba(255,255,255,.36);letter-spacing:1.27px;">пятница</span><svg class="r" style="left:1872px;top:0px;" width="48" height="42" viewBox="0 0 48 42"><path d="M0,0 H48 V42 Z" fill="#d9d2ee"/><path d="M4,0 L48,38 L20,34 Q10,20 4,0 Z" fill="#f1eef8"/><path d="M4,0 Q12,22 20,34" fill="none" stroke="#b8aed4" stroke-width="1"/><g transform="rotate(40 30 14)"><rect x="19" y="8" width="24" height="11" fill="#eef2fb"/><text x="20" y="18" font-family="Liberation Sans" font-weight="700" font-size="12" fill="#1d6fe0" textLength="22">OVG</text></g></svg><div class="r" style="left:1771px;top:213px;width:124px;height:128px;background:linear-gradient(135deg,rgba(255,255,255,.26),rgba(255,255,255,.14));border:1px solid rgba(255,255,255,.42);box-shadow:0 2px 6px rgba(60,20,120,.3);border-radius:2px;"></div><svg class="r" style="left:1771px;top:213px;" width="124" height="128" viewBox="0 0 124 128"><path d="M40,0 H124 V95 Z" fill="rgba(255,255,255,.10)"/></svg><span class="t" style="left:1810.0px;top:224.7px;font-size:12.5px;color:rgba(255,255,255,.85);letter-spacing:-0.18px;">пятница</span><span class="t" style="left:1794.0px;top:239.2px;font-size:80px;color:rgba(255,255,255,.8);letter-spacing:-4.49px;">15</span><span class="t" style="left:1792.5px;top:320.1px;font-size:13.5px;color:rgba(255,255,255,.9);letter-spacing:-0.43px;">Октябрь 2021</span><span class="t" style="left:1770.0px;top:369.2px;font-size:17px;color:rgba(255,255,255,.92);letter-spacing:-1.96px;transform:scaleY(1.15);">CPU</span><span class="t" style="left:1850.0px;top:352.0px;font-size:36px;color:rgba(255,255,255,.92);">5</span><span class="t" style="left:1868.0px;top:367.7px;font-size:29px;color:rgba(255,255,255,.92);transform:scaleY(1.3);">%</span><div class="r" style="left:1769px;top:386.5px;width:100px;height:1.3px;background:rgba(255,255,255,.9);"></div><div class="r" style="left:1769px;top:389px;width:100px;height:6.5px;background:repeating-linear-gradient(90deg,rgba(255,255,255,.32) 0 2.5px,transparent 2.5px 4px);-webkit-mask-image:linear-gradient(180deg,#000,transparent);mask-image:linear-gradient(180deg,#000 20%,transparent);"></div><div class="r" style="left:1769px;top:389px;width:2.5px;height:6.5px;background:repeating-linear-gradient(90deg,rgba(255,255,255,.95) 0 2.5px,transparent 2.5px 4px);"></div><div class="r" style="left:1769px;top:399.5px;width:100px;height:6.5px;background:repeating-linear-gradient(90deg,rgba(255,255,255,.32) 0 2.5px,transparent 2.5px 4px);-webkit-mask-image:linear-gradient(180deg,#000,transparent);mask-image:linear-gradient(180deg,#000 20%,transparent);"></div><div class="r" style="left:1769px;top:410.5px;width:100px;height:6.5px;background:repeating-linear-gradient(90deg,rgba(255,255,255,.32) 0 2.5px,transparent 2.5px 4px);-webkit-mask-image:linear-gradient(180deg,#000,transparent);mask-image:linear-gradient(180deg,#000 20%,transparent);"></div><div class="r" style="left:1769px;top:421px;width:100px;height:6.5px;background:repeating-linear-gradient(90deg,rgba(255,255,255,.32) 0 2.5px,transparent 2.5px 4px);-webkit-mask-image:linear-gradient(180deg,#000,transparent);mask-image:linear-gradient(180deg,#000 20%,transparent);"></div><div class="r" style="left:1769px;top:431.5px;width:100px;height:6.5px;background:repeating-linear-gradient(90deg,rgba(255,255,255,.32) 0 2.5px,transparent 2.5px 4px);-webkit-mask-image:linear-gradient(180deg,#000,transparent);mask-image:linear-gradient(180deg,#000 20%,transparent);"></div><div class="r" style="left:1769px;top:442.5px;width:100px;height:6.5px;background:repeating-linear-gradient(90deg,rgba(255,255,255,.32) 0 2.5px,transparent 2.5px 4px);-webkit-mask-image:linear-gradient(180deg,#000,transparent);mask-image:linear-gradient(180deg,#000 20%,transparent);"></div><div class="r" style="left:1769px;top:442.5px;width:35px;height:6.5px;background:repeating-linear-gradient(90deg,rgba(255,255,255,.95) 0 2.5px,transparent 2.5px 4px);"></div><div class="r" style="left:1769px;top:453px;width:100px;height:6.5px;background:repeating-linear-gradient(90deg,rgba(255,255,255,.32) 0 2.5px,transparent 2.5px 4px);-webkit-mask-image:linear-gradient(180deg,#000,transparent);mask-image:linear-gradient(180deg,#000 20%,transparent);"></div><div class="r" style="left:1769px;top:453px;width:2.5px;height:6.5px;background:repeating-linear-gradient(90deg,rgba(255,255,255,.95) 0 2.5px,transparent 2.5px 4px);"></div><div class="r" style="left:1769px;top:464px;width:100px;height:6.5px;background:repeating-linear-gradient(90deg,rgba(255,255,255,.32) 0 2.5px,transparent 2.5px 4px);-webkit-mask-image:linear-gradient(180deg,#000,transparent);mask-image:linear-gradient(180deg,#000 20%,transparent);"></div><div class="r" style="left:1769px;top:464px;width:2.5px;height:6.5px;background:repeating-linear-gradient(90deg,rgba(255,255,255,.95) 0 2.5px,transparent 2.5px 4px);"></div><span class="t" style="left:1770.0px;top:499.2px;font-size:17px;color:rgba(255,255,255,.92);letter-spacing:-1.22px;transform:scaleY(1.15);font-style:italic;">MEM</span><span class="t" style="left:1833.0px;top:482.0px;font-size:36px;color:rgba(255,255,255,.92);transform:scaleX(.68);transform-origin:left center;">1.8</span><span class="t" style="left:1872.0px;top:500.4px;font-size:26px;color:rgba(255,255,255,.92);letter-spacing:-7.28px;transform:scaleY(1.3);">GB</span><div class="r" style="left:1769px;top:516.5px;width:100px;height:1.3px;background:rgba(255,255,255,.9);"></div><div class="r" style="left:1769px;top:519px;width:100px;height:7px;background:repeating-linear-gradient(90deg,rgba(255,255,255,.32) 0 2.5px,transparent 2.5px 4px);mask-image:linear-gradient(180deg,#000 20%,transparent);-webkit-mask-image:linear-gradient(180deg,#000 20%,transparent);"></div><div class="r" style="left:1769px;top:519px;width:11px;height:7px;background:repeating-linear-gradient(90deg,rgba(255,255,255,.95) 0 2.5px,transparent 2.5px 4px);"></div>
<!-- p_taskbar -->
<svg class="r" style="left:13px;top:1047px;" width="22" height="22" viewBox="0 0 22 22"><rect x="0" y="0" width="10.2" height="10.2" fill="#1b78d8"/><rect x="11.4" y="0" width="10.2" height="10.2" fill="#1b78d8"/><rect x="0" y="11.4" width="10.2" height="10.2" fill="#1b78d8"/><rect x="11.4" y="11.4" width="10.2" height="10.2" fill="#1b78d8"/></svg><svg class="r" style="left:60px;top:1046px;" width="25" height="25" viewBox="0 0 25 25"><circle cx="14.5" cy="9.5" r="8" fill="none" stroke="#e8ecfa" stroke-width="2.4"/><path d="M9,15.5 L2,23" stroke="#e8ecfa" stroke-width="3" stroke-linecap="round"/></svg><svg class="r" style="left:110px;top:1047px;" width="27" height="23" viewBox="0 0 27 23"><defs><linearGradient id="tf" x1="0" y1="0" x2="0" y2="1"><stop offset="0" stop-color="#ffe082"/><stop offset="1" stop-color="#f7c23a"/></linearGradient></defs><path d="M0,2.5 Q0,0.5 2,0.5 H9 L12,3.5 H25 Q27,3.5 27,5.5 V8 H0 Z" fill="#e8a020"/><rect x="0" y="5" width="27" height="17.5" rx="2" fill="url(#tf)"/><path d="M5,22.5 V17 Q5,14.5 7.5,14.5 H19.5 Q22,14.5 22,17 V22.5 Z" fill="#1f7ad8"/></svg><svg class="r" style="left:159px;top:1046px;" width="26" height="26" viewBox="0 0 26 26"><defs><linearGradient id="te1" x1="0" y1="0" x2="1" y2="1"><stop offset="0" stop-color="#35c1f1"/><stop offset="1" stop-color="#0c59a4"/></linearGradient><linearGradient id="te2" x1="0" y1="0" x2="1" y2="0"><stop offset="0" stop-color="#2ab4e8"/><stop offset=".6" stop-color="#4cd070"/><stop offset="1" stop-color="#7ce050"/></linearGradient></defs><circle cx="13" cy="13" r="12.5" fill="url(#te1)"/><path d="M1,11 Q2,1 13,0.5 Q24,1 25.5,11 Q25.5,16.5 19.5,17 Q15,17 15.7,13.5 Q16,11.5 14,10 Q10,7.5 5.5,10.5 Q2.2,13 2.8,17.5 Q0.6,15 1,11 Z" fill="url(#te2)"/><path d="M2.8,17.5 Q2.2,13 5.5,10.5 Q10,7.8 13.5,10.5 Q11,11 10.3,14 Q10.3,19.5 16.3,21.7 Q20.6,22.8 24,19 Q20.6,25.5 13,25.3 Q5.4,25 2.8,17.5 Z" fill="#0f4f9a"/><path d="M10.3,14 Q11,11.5 13.5,10.5 Q16.3,11.5 15.7,13.5 Q15.2,16.3 18.5,17 Q14.6,18 12,17 Q10.3,15.8 10.3,14 Z" fill="#f0f6fc"/></svg><svg class="r" style="left:208px;top:1045px;" width="24" height="27" viewBox="0 0 24 27"><path d="M7,7 Q7,1 12,1 Q17,1 17,7" fill="none" stroke="#d8dcec" stroke-width="1.6"/><rect x="0.5" y="7" width="23" height="19" rx="1.5" fill="#f0f0f4"/><rect x="6.5" y="11.5" width="4.6" height="4.6" fill="#f25022"/><rect x="12.5" y="11.5" width="4.6" height="4.6" fill="#7fba00"/><rect x="6.5" y="17.5" width="4.6" height="4.6" fill="#00a4ef"/><rect x="12.5" y="17.5" width="4.6" height="4.6" fill="#ffb900"/></svg><svg class="r" style="left:258px;top:1049px;" width="25" height="19" viewBox="0 0 25 19"><rect x=".5" y=".5" width="24" height="18" fill="#d4ecf8" stroke="#7ab4d8" stroke-width="1"/><path d="M1.5,15 L4,9 L6,14 L8.5,4 L11,15 L13.5,8 L15.5,13 L18,6 L20,14 L23.5,12.5 V18 H1.5 Z" fill="#8cc4e4" stroke="#2f7fb4" stroke-width="1"/></svg><svg class="r" style="left:307.5px;top:1046.5px;" width="23" height="23" viewBox="0 0 16 16"><circle cx="8" cy="8" r="7.3" fill="#f4f0ec" stroke="#9a948c" stroke-width="1.2"/><circle cx="8" cy="8" r="5.6" fill="#fbfaf8" stroke="#d8d2c8" stroke-width=".6"/><path d="M4.2,3.2 L9.2,10.2" stroke="#c8201c" stroke-width="1.8"/><path d="M9.2,10.2 L10.5,12" stroke="#555" stroke-width="1"/></svg><div class="r" style="left:104px;top:1078px;width:30px;height:2px;background:#dcdaf2;"></div><div class="r" style="left:250px;top:1078px;width:40px;height:2px;background:#dcdaf2;"></div><div class="r" style="left:300px;top:1078px;width:38px;height:2px;background:#dcdaf2;"></div><svg class="r" style="left:1711px;top:1054px;" width="11" height="8" viewBox="0 0 11 8"><path d="M1,6.5 L5.5,2 L10,6.5" fill="none" stroke="#fdfdff" stroke-width="1.2"/></svg><svg class="r" style="left:1733px;top:1049px;" width="18" height="18" viewBox="0 0 18 18"><rect x="1" y="3.5" width="11" height="8.5" fill="none" stroke="#fdfdff" stroke-width="1.2"/><path d="M6.5,12 V15 M3,15.5 H10" stroke="#fdfdff" stroke-width="1.2"/><rect x="12.5" y="0.8" width="3.6" height="3.6" fill="none" stroke="#fdfdff" stroke-width="1"/><path d="M14.3,4.5 V15.5 H12" fill="none" stroke="#fdfdff" stroke-width="1.1"/></svg><svg class="r" style="left:1756px;top:1050px;" width="18" height="16" viewBox="0 0 18 16"><path d="M1,5.5 H4 L8,2 V14 L4,10.5 H1 Z" fill="none" stroke="#fdfdff" stroke-width="1.1"/><path d="M10.5,5.5 Q12,8 10.5,10.5 M12.8,3.8 Q15.2,8 12.8,12.2 M15,2.2 Q18.2,8 15,13.8" fill="none" stroke="#fdfdff" stroke-width="1"/></svg><span class="t" style="left:1784.0px;top:1052.4px;font-size:12px;color:#fdfdff;letter-spacing:-0.68px;">РУС</span><span class="t" style="left:1831.5px;top:1043.4px;font-size:12px;color:#fdfdff;letter-spacing:-0.61px;">20:29</span><span class="t" style="left:1820.0px;top:1061.4px;font-size:12px;color:#fdfdff;letter-spacing:-0.81px;">15.10.2021</span><svg class="r" style="left:1889px;top:1051px;" width="16" height="15.1" viewBox="0 0 18 17"><path d="M1.5,1 H16.5 V11.5 H11.5 L9,15 L6.5,11.5 H1.5 Z" fill="none" stroke="#fdfdff" stroke-width="1.3"/></svg>
</body></html>
